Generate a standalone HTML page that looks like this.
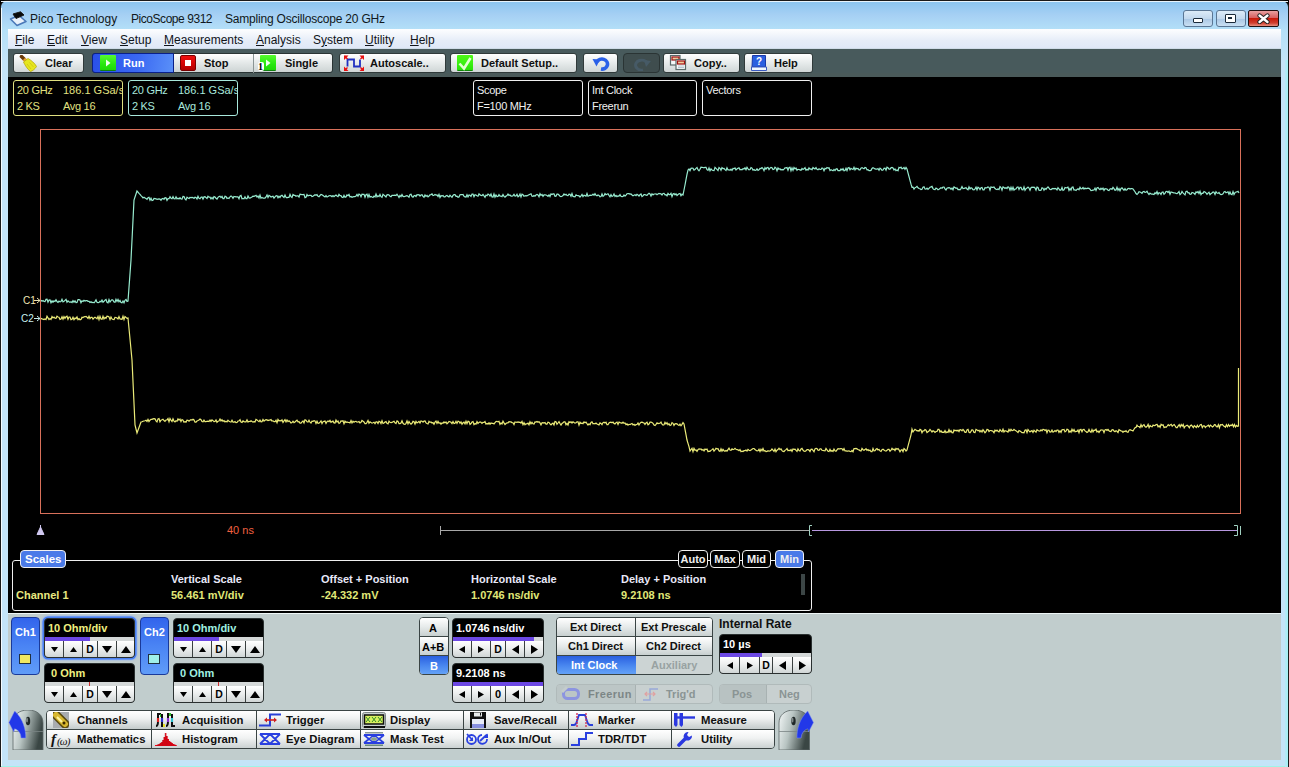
<!DOCTYPE html>
<html><head><meta charset="utf-8"><style>
*{margin:0;padding:0;box-sizing:border-box}
html,body{width:1289px;height:767px;overflow:hidden;background:#000;font-family:"Liberation Sans", sans-serif}
.t{position:absolute;white-space:nowrap;line-height:1}
.btn{position:absolute;border:1px solid #303a3a;border-radius:3px;background:linear-gradient(#ffffff,#e9eded 45%,#cfd6d6);}
.b{font-weight:bold}
</style></head><body>

<div style="position:absolute;left:0px;top:0px;width:1289px;height:767px;background:linear-gradient(#8ec6f0 2px,#a6d0f4 14px,#b4e0f8 29px,#c4e4f8 60px,#c4e4f8 760px);border-left:1px solid #1a1a1a;border-top:1px solid #1a1a1a;border-right:1px solid #1a1a1a;border-radius:7px 7px 0 0"></div>
<div style="position:absolute;left:1px;top:1px;width:1287px;height:1px;background:#e8f4fc"></div>
<div style="position:absolute;left:1px;top:8px;width:1px;height:759px;background:#f4fbff"></div>
<div style="position:absolute;left:1px;top:766px;width:1287px;height:1px;background:#9ff4e6"></div>
<div style="position:absolute;left:1285px;top:60px;width:3px;height:707px;background:linear-gradient(90deg,#b8e8f8,#a2f2f4)"></div>
<svg style="position:absolute;left:9px;top:10px" width="18" height="17" viewBox="0 0 18 17">
<path d="M1.5 9 L10 5.5 L17 11.5 L8 15.5 Z" fill="#e8f0fa" stroke="#4a78b8" stroke-width="1.6" stroke-linejoin="round"/>
<path d="M4 4 L11.5 1.8 L15 5 L7 8.5 Z" fill="#0a0a0a" stroke="#1a1a1a" stroke-width="1" stroke-linejoin="round"/>
</svg>
<div class="t" style="left:30px;top:13px;font-size:12px;color:#101820">Pico Technology</div>
<div class="t" style="left:131px;top:13px;font-size:12px;color:#101820;letter-spacing:-0.45px">PicoScope 9312</div>
<div class="t" style="left:225px;top:13px;font-size:12px;color:#101820;letter-spacing:-0.2px">Sampling Oscilloscope 20 GHz</div>
<div style="position:absolute;left:1183px;top:10px;width:30px;height:17px;border:1px solid #5a7694;border-radius:3px;background:linear-gradient(#dcebf8,#c3d9ee 50%,#a9c6e4 52%,#c9e0f3)"></div>
<div style="position:absolute;left:1193px;top:18px;width:10px;height:5px;border:1.5px solid #1a2a3a;background:#fff;border-radius:1px"></div>
<div style="position:absolute;left:1216px;top:10px;width:30px;height:17px;border:1px solid #5a7694;border-radius:3px;background:linear-gradient(#dcebf8,#c3d9ee 50%,#a9c6e4 52%,#c9e0f3)"></div>
<div style="position:absolute;left:1225px;top:14px;width:11px;height:9px;border:1.5px solid #1a2a3a;background:#fff;border-radius:1px"><div style="position:absolute;left:2px;top:2px;width:4px;height:2px;background:#1a2a3a"></div></div>
<div style="position:absolute;left:1248px;top:10px;width:31px;height:17px;border:1px solid #201010;border-radius:2px;background:linear-gradient(#e8a0a0,#d86060 45%,#c81a0a 50%,#d04030 80%,#e89080)"></div>
<svg style="position:absolute;left:1256px;top:13px" width="15" height="11" viewBox="0 0 15 11"><path d="M3.5 2.5 L11.5 9 M11.5 2.5 L3.5 9" stroke="#202020" stroke-width="4.2" stroke-linecap="round"/><path d="M3.5 2.5 L11.5 9 M11.5 2.5 L3.5 9" stroke="#fff" stroke-width="2.4" stroke-linecap="round"/></svg>
<div style="position:absolute;left:8px;top:29px;width:1273px;height:20px;background:linear-gradient(#fdfeff,#f4f7fc 25%,#e6edf8 60%,#dfe8f7);border-bottom:1px solid #cfdce8"></div>
<div class="t" style="left:15px;top:33px;font-size:12px;color:#10141a;line-height:14px"><u>F</u>ile</div>
<div class="t" style="left:47px;top:33px;font-size:12px;color:#10141a;line-height:14px"><u>E</u>dit</div>
<div class="t" style="left:81px;top:33px;font-size:12px;color:#10141a;line-height:14px"><u>V</u>iew</div>
<div class="t" style="left:120px;top:33px;font-size:12px;color:#10141a;line-height:14px"><u>S</u>etup</div>
<div class="t" style="left:164px;top:33px;font-size:12px;color:#10141a;line-height:14px"><u>M</u>easurements</div>
<div class="t" style="left:256px;top:33px;font-size:12px;color:#10141a;line-height:14px"><u>A</u>nalysis</div>
<div class="t" style="left:313px;top:33px;font-size:12px;color:#10141a;line-height:14px">S<u>y</u>stem</div>
<div class="t" style="left:365px;top:33px;font-size:12px;color:#10141a;line-height:14px"><u>U</u>tility</div>
<div class="t" style="left:410px;top:33px;font-size:12px;color:#10141a;line-height:14px"><u>H</u>elp</div>
<div style="position:absolute;left:8px;top:49px;width:1273px;height:28px;background:#485a5c"></div>
<div style="position:absolute;left:8px;top:73px;width:1273px;height:4px;background:#4a5a5a"></div>
<div class="btn" style="left:13px;top:53px;width:71px;height:20px;"></div>
<div class="t" style="left:45px;top:58px;font-size:11px;font-weight:bold;color:#101010;">Clear</div>
<svg style="position:absolute;left:19px;top:55px" width="19" height="17" viewBox="0 0 19 17">
<path d="M2.5 1.5 L5.5 4.5" stroke="#6a3a08" stroke-width="3.6" stroke-linecap="round"/>
<path d="M5 4 L8 7" stroke="#e8a030" stroke-width="3.6"/>
<path d="M4.5 7 L9 3.5 C12 5 16 8.5 17.5 11.5 C16 14 13.5 16 11.5 16.5 C8.5 14 6 10.5 4.5 7 Z" fill="#e6e61e" stroke="#b8a810" stroke-width="0.8"/>
<path d="M8 9 L12 14 M10.5 7.5 L14.5 12" stroke="#c8c010" stroke-width="0.7"/>
</svg>
<div style="position:absolute;left:92px;top:53px;width:241px;height:20px;border:1px solid #2a3434;border-radius:3px;background:linear-gradient(#ffffff,#e6eaea 45%,#cdd4d4)"></div>
<div style="position:absolute;left:92px;top:53px;width:82px;height:20px;border:1px solid #0a2088;border-radius:3px 0 0 3px;background:linear-gradient(100deg,#2a50ea,#3a68f2 55%,#5a90f8)"></div>
<div style="position:absolute;left:253px;top:54px;width:1px;height:19px;background:#8a9494"></div>
<div style="position:absolute;left:100px;top:55px;width:16px;height:16px;background:linear-gradient(#58fa30,#28e810 60%,#20d808);border-bottom:1px solid #108010;border-radius:1px"></div>
<svg style="position:absolute;left:100px;top:55px" width="16" height="16"><path d="M6 4.5 L10.5 8 L6 11.5 Z" fill="#f0fff0"/></svg>
<div class="t" style="left:123px;top:58px;font-size:11px;font-weight:bold;color:#fff">Run</div>
<div style="position:absolute;left:180px;top:55px;width:16px;height:16px;background:linear-gradient(#f01010,#d00404 60%,#b00000);border:1px solid #700;border-radius:2px"></div>
<div style="position:absolute;left:185px;top:60px;width:6px;height:6px;background:#fff"></div>
<div class="t" style="left:204px;top:58px;font-size:11px;font-weight:bold;color:#101010">Stop</div>
<div style="position:absolute;left:260px;top:55px;width:16px;height:16px;background:linear-gradient(#58fa30,#28e810 60%,#20d808);border-bottom:1px solid #108010;border-radius:1px"></div>
<svg style="position:absolute;left:260px;top:55px" width="16" height="16"><path d="M6 4.5 L10.5 8 L6 11.5 Z" fill="#f0fff0"/></svg>
<div style="position:absolute;left:258px;top:62px;width:6px;height:9px;background:#fff;border-radius:2px"></div>
<div class="t" style="left:258px;top:62px;font-size:10px;font-weight:bold;color:#000;font-family:'Liberation Serif'">1</div>
<div class="t" style="left:285px;top:58px;font-size:11px;font-weight:bold;color:#101010">Single</div>
<div class="btn" style="left:339px;top:53px;width:107px;height:20px;"></div>
<div class="t" style="left:370px;top:58px;font-size:11px;font-weight:bold;color:#101010;">Autoscale..</div>
<svg style="position:absolute;left:344px;top:55px" width="20" height="17" viewBox="0 0 20 17">
<path d="M3.5 11.5 V4.5 H10 V11.5 H16 V4.5" stroke="#2030c0" stroke-width="1.8" fill="none"/>
<path d="M0 0.5 H4.5 L0 5 Z M20 0.5 H15.5 L20 5 Z M0 16 H4.5 L0 11.5 Z M20 16 H15.5 L20 11.5 Z" fill="#e81010"/>
<path d="M0.5 1 L3.5 4 M19.5 1 L16.5 4 M0.5 15.5 L3.5 12.5 M19.5 15.5 L16.5 12.5" stroke="#e81010" stroke-width="1.4"/>
</svg>
<div class="btn" style="left:450px;top:53px;width:127px;height:20px;"></div>
<div class="t" style="left:481px;top:58px;font-size:11px;font-weight:bold;color:#101010;">Default Setup..</div>
<div style="position:absolute;left:457px;top:55px;width:16px;height:16px;background:linear-gradient(#50f818,#38f010 60%,#28e008);border-bottom:1.5px solid #108808;border-radius:1px"></div>
<svg style="position:absolute;left:457px;top:55px" width="16" height="16"><path d="M2.5 8.5 L7 13.5 L13.5 3" stroke="#e0ffd0" stroke-width="2.6" fill="none"/></svg>
<div class="btn" style="left:583px;top:53px;width:35px;height:20px;"></div>
<svg style="position:absolute;left:591px;top:56px" width="20" height="15" viewBox="0 0 20 15"><path d="M6 6 A5.5 5 0 1 1 10 13" stroke="#2a60e8" stroke-width="3.6" fill="none"/><path d="M1.5 3 L9 3.5 L5.5 10.5 Z" fill="#2a60e8"/></svg>
<div style="position:absolute;left:623px;top:53px;width:37px;height:20px;border:1px solid #2a3434;border-radius:4px;background:#3f4d4e"></div>
<svg style="position:absolute;left:632px;top:57px" width="20" height="14" viewBox="0 0 20 14"><path d="M15 6 A6 5 0 1 0 11 13" stroke="#465a66" stroke-width="3" fill="none"/><path d="M19 4 L12 3 L14 10 Z" fill="#465a66"/></svg>
<div class="btn" style="left:663px;top:53px;width:77px;height:20px;"></div>
<div class="t" style="left:694px;top:58px;font-size:11px;font-weight:bold;color:#101010;">Copy..</div>
<svg style="position:absolute;left:669px;top:54px" width="19" height="17" viewBox="0 0 19 17">
<rect x="1.5" y="1.5" width="9.5" height="9.5" fill="#f4fafa" stroke="#5a6a6a" stroke-width="1.2"/><rect x="3" y="3" width="7" height="3" fill="#f0d0a0" stroke="#a01010" stroke-width="1.2"/>
<rect x="7" y="5.5" width="9.5" height="10" fill="#f8fcfc" stroke="#5a6a6a" stroke-width="1.2"/><rect x="8.5" y="7" width="7" height="3" fill="#f0d0a0" stroke="#a01010" stroke-width="1.2"/>
<path d="M9 12 H15 M9 13.5 H15" stroke="#a0b0c0" stroke-width="0.7"/>
</svg>
<div class="btn" style="left:744px;top:53px;width:69px;height:20px;"></div>
<div class="t" style="left:774px;top:58px;font-size:11px;font-weight:bold;color:#101010;">Help</div>
<svg style="position:absolute;left:751px;top:55px" width="16" height="16" viewBox="0 0 16 16">
<path d="M1.5 0.5 H14.5 V12 H1 Z" fill="#2a60e0" stroke="#1a3aa8" stroke-width="1"/>
<path d="M0.5 12 H15.5 V15.5 H0.5 Z" fill="#f0f8ff" stroke="#3a5ac0" stroke-width="1"/>
<text x="8" y="10" font-size="10" font-weight="bold" fill="#fff" text-anchor="middle" font-family="Liberation Sans">?</text>
</svg>
<div style="position:absolute;left:8px;top:77px;width:1273px;height:537px;background:#000"></div>
<div style="position:absolute;left:13px;top:80px;width:110px;height:36px;border:1px solid #e0e080;border-radius:3px;overflow:hidden">
<div class="t" style="left:3px;top:4px;font-size:11px;letter-spacing:-0.3px;color:#e0e080">20 GHz</div>
<div class="t" style="left:49px;top:4px;font-size:11px;color:#e0e080">186.1 GSa/s</div>
<div class="t" style="left:3px;top:20px;font-size:11px;letter-spacing:-0.3px;color:#e0e080">2 KS</div>
<div class="t" style="left:49px;top:20px;font-size:11px;letter-spacing:-0.3px;color:#e0e080">Avg 16</div>
</div>
<div style="position:absolute;left:128px;top:80px;width:110px;height:36px;border:1px solid #a8e8dc;border-radius:3px;overflow:hidden">
<div class="t" style="left:3px;top:4px;font-size:11px;letter-spacing:-0.3px;color:#a8e8dc">20 GHz</div>
<div class="t" style="left:49px;top:4px;font-size:11px;color:#a8e8dc">186.1 GSa/s</div>
<div class="t" style="left:3px;top:20px;font-size:11px;letter-spacing:-0.3px;color:#a8e8dc">2 KS</div>
<div class="t" style="left:49px;top:20px;font-size:11px;letter-spacing:-0.3px;color:#a8e8dc">Avg 16</div>
</div>
<div style="position:absolute;left:473px;top:80px;width:110px;height:36px;border:1px solid #f0f0f0;border-radius:3px;overflow:hidden">
<div class="t" style="left:3px;top:4px;font-size:11px;letter-spacing:-0.3px;color:#f0f0f0">Scope</div>
<div class="t" style="left:3px;top:20px;font-size:11px;letter-spacing:-0.3px;color:#f0f0f0">F=100 MHz</div>
</div>
<div style="position:absolute;left:588px;top:80px;width:109px;height:36px;border:1px solid #f0f0f0;border-radius:3px;overflow:hidden">
<div class="t" style="left:3px;top:4px;font-size:11px;letter-spacing:-0.3px;color:#f0f0f0">Int Clock</div>
<div class="t" style="left:3px;top:20px;font-size:11px;letter-spacing:-0.3px;color:#f0f0f0">Freerun</div>
</div>
<div style="position:absolute;left:702px;top:80px;width:110px;height:36px;border:1px solid #f0f0f0;border-radius:3px;overflow:hidden">
<div class="t" style="left:3px;top:4px;font-size:11px;letter-spacing:-0.3px;color:#f0f0f0">Vectors</div>
<div class="t" style="left:3px;top:20px;font-size:11px;letter-spacing:-0.3px;color:#f0f0f0"></div>
</div>
<svg style="position:absolute;left:0;top:0" width="1289" height="767">
<rect x="40.5" y="129.5" width="1200" height="384" fill="none" stroke="#d8705a" stroke-width="1"/>
<polyline points="41.0,300.1 42.0,301.2 43.0,300.5 44.0,301.4 45.0,301.5 46.0,299.4 47.0,299.2 48.0,302.2 49.0,300.1 50.0,300.0 51.0,302.8 52.0,300.9 53.0,302.2 54.0,300.9 55.0,301.5 56.0,299.7 57.0,301.5 58.0,302.3 59.0,301.1 60.0,301.9 61.0,301.6 62.0,299.4 63.0,301.9 64.0,301.3 65.0,300.3 66.0,299.3 67.0,302.3 68.0,300.9 69.0,301.8 70.0,302.4 71.0,301.8 72.0,302.5 73.0,300.6 74.0,302.1 75.0,300.8 76.0,302.6 77.0,302.4 78.0,299.6 79.0,299.7 80.0,300.0 81.0,302.7 82.0,300.8 83.0,301.5 84.0,300.3 85.0,301.0 86.0,300.6 87.0,300.5 88.0,301.3 89.0,301.3 90.0,302.5 91.0,301.7 92.0,302.5 93.0,302.3 94.0,302.8 95.0,301.6 96.0,299.8 97.0,302.3 98.0,302.7 99.0,302.5 100.0,301.2 101.0,301.8 102.0,300.0 103.0,302.2 104.0,301.3 105.0,300.2 106.0,299.4 107.0,302.3 108.0,302.8 109.0,299.5 110.0,302.1 111.0,300.7 112.0,299.7 113.0,300.3 114.0,302.0 115.0,302.3 116.0,299.4 117.0,301.4 118.0,299.4 119.0,301.8 120.0,300.4 121.0,302.4 122.0,302.7 123.0,301.0 124.0,302.8 125.0,300.3 126.0,299.5 127.0,301.4 128.0,301.0 129.0,287.3 130.0,273.7 131.0,260.0 132.0,240.0 133.0,220.0 134.0,200.0 135.0,197.0 136.0,194.0 137.0,191.0 138.0,192.1 139.0,193.3 140.0,194.4 141.0,195.6 142.0,196.7 143.0,197.9 144.0,197.3 145.0,197.9 146.0,198.6 147.0,199.3 148.0,197.7 149.0,197.3 150.0,200.2 151.0,198.2 152.0,200.5 153.0,200.3 154.0,198.4 155.0,198.6 156.0,198.8 157.0,199.3 158.0,199.1 159.0,198.9 160.0,199.1 161.0,200.3 162.0,198.7 163.0,198.4 164.0,199.4 165.0,197.7 166.0,197.9 167.0,200.3 168.0,198.6 169.0,198.7 170.0,196.7 171.0,198.2 172.0,198.7 173.0,196.7 174.0,198.8 175.0,198.9 176.0,196.8 177.0,198.8 178.0,198.2 179.0,199.0 180.0,197.8 181.0,199.0 182.0,199.1 183.0,196.5 184.0,196.6 185.0,198.8 186.0,199.9 187.0,197.3 188.0,198.0 189.0,198.5 190.0,197.5 191.0,197.6 192.0,197.4 193.0,197.6 194.0,198.4 195.0,197.3 196.0,197.6 197.0,199.0 198.0,196.3 199.0,198.2 200.0,198.8 201.0,197.2 202.0,196.9 203.0,199.0 204.0,196.9 205.0,196.7 206.0,197.6 207.0,198.5 208.0,196.3 209.0,197.1 210.0,197.1 211.0,198.9 212.0,197.5 213.0,199.0 214.0,196.5 215.0,197.0 216.0,198.2 217.0,199.0 218.0,197.4 219.0,196.6 220.0,196.2 221.0,197.6 222.0,196.4 223.0,198.6 224.0,198.7 225.0,196.3 226.0,196.6 227.0,198.5 228.0,197.9 229.0,198.5 230.0,196.8 231.0,196.0 232.0,196.6 233.0,198.3 234.0,196.4 235.0,196.7 236.0,196.9 237.0,196.9 238.0,196.9 239.0,198.7 240.0,195.9 241.0,195.4 242.0,198.7 243.0,198.5 244.0,198.8 245.0,196.8 246.0,198.7 247.0,198.6 248.0,196.0 249.0,197.9 250.0,198.2 251.0,197.5 252.0,197.0 253.0,196.1 254.0,196.3 255.0,195.9 256.0,195.3 257.0,197.1 258.0,196.0 259.0,197.9 260.0,195.1 261.0,198.2 262.0,197.4 263.0,198.2 264.0,198.1 265.0,198.1 266.0,196.9 267.0,194.9 268.0,197.5 269.0,195.4 270.0,195.9 271.0,197.1 272.0,196.6 273.0,196.2 274.0,198.1 275.0,196.9 276.0,195.9 277.0,195.6 278.0,197.7 279.0,196.3 280.0,197.4 281.0,195.8 282.0,195.3 283.0,196.5 284.0,197.4 285.0,195.1 286.0,197.3 287.0,197.8 288.0,197.3 289.0,197.4 290.0,194.4 291.0,196.6 292.0,197.5 293.0,194.5 294.0,195.3 295.0,195.3 296.0,196.2 297.0,195.8 298.0,195.9 299.0,197.0 300.0,194.2 301.0,194.4 302.0,194.7 303.0,194.6 304.0,194.4 305.0,197.7 306.0,197.3 307.0,194.5 308.0,196.0 309.0,195.3 310.0,195.3 311.0,195.4 312.0,196.5 313.0,196.3 314.0,195.5 315.0,194.8 316.0,195.3 317.0,194.6 318.0,196.2 319.0,196.7 320.0,195.5 321.0,194.4 322.0,194.8 323.0,195.5 324.0,196.3 325.0,197.0 326.0,195.5 327.0,197.0 328.0,196.4 329.0,195.7 330.0,195.5 331.0,195.9 332.0,196.6 333.0,195.6 334.0,196.6 335.0,195.8 336.0,195.0 337.0,196.0 338.0,196.6 339.0,194.4 340.0,195.6 341.0,195.6 342.0,197.3 343.0,197.5 344.0,195.4 345.0,197.3 346.0,196.9 347.0,195.0 348.0,195.7 349.0,194.5 350.0,197.0 351.0,196.5 352.0,197.3 353.0,196.9 354.0,196.5 355.0,196.7 356.0,196.1 357.0,194.4 358.0,196.2 359.0,194.1 360.0,194.6 361.0,196.8 362.0,194.2 363.0,194.4 364.0,194.4 365.0,197.2 366.0,194.7 367.0,194.1 368.0,197.1 369.0,194.5 370.0,197.1 371.0,196.4 372.0,197.0 373.0,197.4 374.0,196.1 375.0,196.9 376.0,194.1 377.0,196.8 378.0,195.8 379.0,196.6 380.0,194.4 381.0,196.7 382.0,197.4 383.0,194.2 384.0,195.1 385.0,196.0 386.0,197.0 387.0,194.8 388.0,194.6 389.0,194.9 390.0,196.2 391.0,196.7 392.0,195.4 393.0,195.3 394.0,195.4 395.0,195.2 396.0,195.5 397.0,194.2 398.0,195.7 399.0,197.4 400.0,195.4 401.0,196.6 402.0,194.5 403.0,196.4 404.0,196.7 405.0,196.4 406.0,195.8 407.0,195.7 408.0,196.2 409.0,197.1 410.0,194.5 411.0,194.3 412.0,196.6 413.0,197.2 414.0,195.8 415.0,195.5 416.0,196.5 417.0,194.6 418.0,194.9 419.0,194.6 420.0,196.0 421.0,195.0 422.0,194.7 423.0,196.4 424.0,197.3 425.0,194.9 426.0,196.4 427.0,195.4 428.0,196.9 429.0,196.0 430.0,194.8 431.0,194.6 432.0,193.9 433.0,195.6 434.0,195.2 435.0,194.5 436.0,195.1 437.0,195.0 438.0,196.6 439.0,194.4 440.0,197.4 441.0,195.6 442.0,196.0 443.0,195.5 444.0,196.8 445.0,196.8 446.0,195.8 447.0,195.5 448.0,196.4 449.0,196.9 450.0,195.2 451.0,196.4 452.0,197.3 453.0,195.5 454.0,194.6 455.0,194.6 456.0,196.4 457.0,196.2 458.0,197.2 459.0,196.9 460.0,194.7 461.0,194.5 462.0,194.7 463.0,194.4 464.0,196.3 465.0,196.9 466.0,197.0 467.0,194.7 468.0,196.9 469.0,194.9 470.0,195.3 471.0,196.4 472.0,194.1 473.0,194.1 474.0,196.7 475.0,194.8 476.0,195.0 477.0,195.8 478.0,196.2 479.0,193.8 480.0,194.9 481.0,195.3 482.0,195.5 483.0,194.5 484.0,195.8 485.0,197.2 486.0,195.1 487.0,195.7 488.0,194.1 489.0,194.7 490.0,196.1 491.0,194.1 492.0,196.9 493.0,197.0 494.0,194.0 495.0,197.1 496.0,195.0 497.0,196.5 498.0,196.4 499.0,194.7 500.0,196.1 501.0,196.0 502.0,196.6 503.0,194.6 504.0,196.4 505.0,197.1 506.0,196.1 507.0,195.6 508.0,194.1 509.0,195.4 510.0,194.9 511.0,196.2 512.0,196.1 513.0,195.7 514.0,194.3 515.0,196.0 516.0,195.9 517.0,194.3 518.0,196.8 519.0,196.0 520.0,194.1 521.0,197.0 522.0,194.1 523.0,194.8 524.0,196.2 525.0,195.8 526.0,195.6 527.0,195.9 528.0,195.3 529.0,194.7 530.0,194.2 531.0,193.8 532.0,196.2 533.0,196.3 534.0,195.5 535.0,196.2 536.0,194.9 537.0,194.5 538.0,195.0 539.0,196.7 540.0,193.7 541.0,195.4 542.0,194.5 543.0,196.3 544.0,194.8 545.0,194.8 546.0,195.0 547.0,195.5 548.0,196.3 549.0,194.8 550.0,196.6 551.0,193.9 552.0,194.5 553.0,193.9 554.0,193.9 555.0,196.3 556.0,196.1 557.0,194.2 558.0,194.2 559.0,195.0 560.0,196.2 561.0,196.5 562.0,196.2 563.0,195.6 564.0,194.0 565.0,194.9 566.0,194.2 567.0,195.4 568.0,195.5 569.0,194.2 570.0,194.4 571.0,196.3 572.0,193.6 573.0,196.4 574.0,196.7 575.0,196.9 576.0,194.9 577.0,195.5 578.0,195.6 579.0,195.8 580.0,197.0 581.0,195.9 582.0,194.5 583.0,196.6 584.0,195.2 585.0,195.6 586.0,196.1 587.0,193.5 588.0,196.2 589.0,195.8 590.0,195.2 591.0,195.3 592.0,195.1 593.0,194.1 594.0,195.3 595.0,193.6 596.0,195.2 597.0,195.7 598.0,195.0 599.0,195.5 600.0,196.9 601.0,196.6 602.0,193.9 603.0,196.3 604.0,195.7 605.0,193.6 606.0,194.7 607.0,194.2 608.0,193.7 609.0,195.3 610.0,196.7 611.0,194.6 612.0,196.5 613.0,195.9 614.0,193.9 615.0,196.5 616.0,195.5 617.0,196.7 618.0,195.9 619.0,196.0 620.0,194.6 621.0,196.3 622.0,196.7 623.0,196.5 624.0,194.9 625.0,196.1 626.0,195.1 627.0,193.7 628.0,193.5 629.0,193.6 630.0,194.1 631.0,193.9 632.0,195.1 633.0,195.8 634.0,195.3 635.0,194.8 636.0,195.7 637.0,194.4 638.0,195.0 639.0,196.0 640.0,194.8 641.0,194.0 642.0,196.5 643.0,195.9 644.0,194.6 645.0,194.6 646.0,195.2 647.0,195.4 648.0,194.1 649.0,193.3 650.0,194.0 651.0,196.1 652.0,193.8 653.0,194.9 654.0,194.0 655.0,194.0 656.0,193.9 657.0,194.7 658.0,193.9 659.0,193.4 660.0,193.7 661.0,193.9 662.0,195.0 663.0,193.5 664.0,193.3 665.0,194.9 666.0,194.7 667.0,195.8 668.0,193.4 669.0,194.7 670.0,194.7 671.0,193.3 672.0,196.7 673.0,194.0 674.0,193.6 675.0,194.9 676.0,193.8 677.0,195.5 678.0,194.5 679.0,193.7 680.0,193.4 681.0,195.8 682.0,194.2 683.0,195.0 684.0,190.0 685.0,185.0 686.0,179.7 687.0,174.3 688.0,170.0 689.0,168.9 690.0,170.6 691.0,168.3 692.0,168.1 693.0,168.2 694.0,170.1 695.0,169.5 696.0,168.4 697.0,167.5 698.0,169.7 699.0,170.7 700.0,169.3 701.0,167.2 702.0,167.3 703.0,167.5 704.0,167.8 705.0,167.3 706.0,167.4 707.0,169.6 708.0,170.4 709.0,167.9 710.0,170.7 711.0,168.9 712.0,170.1 713.0,170.5 714.0,170.6 715.0,167.3 716.0,168.3 717.0,169.4 718.0,170.6 719.0,167.5 720.0,168.3 721.0,170.3 722.0,167.6 723.0,168.6 724.0,168.4 725.0,169.6 726.0,170.5 727.0,167.8 728.0,169.9 729.0,169.8 730.0,170.2 731.0,169.2 732.0,170.5 733.0,168.5 734.0,168.7 735.0,168.0 736.0,170.0 737.0,168.9 738.0,168.2 739.0,167.8 740.0,169.8 741.0,169.4 742.0,169.8 743.0,168.6 744.0,169.0 745.0,167.8 746.0,169.8 747.0,167.3 748.0,168.9 749.0,169.9 750.0,169.6 751.0,167.5 752.0,168.1 753.0,170.2 754.0,169.5 755.0,170.4 756.0,170.3 757.0,168.8 758.0,170.4 759.0,169.8 760.0,168.4 761.0,168.5 762.0,167.5 763.0,168.6 764.0,170.6 765.0,167.6 766.0,169.2 767.0,167.6 768.0,167.5 769.0,169.5 770.0,168.1 771.0,167.4 772.0,167.7 773.0,169.5 774.0,169.3 775.0,167.2 776.0,168.0 777.0,170.7 778.0,168.0 779.0,169.2 780.0,168.7 781.0,170.0 782.0,169.4 783.0,170.0 784.0,169.1 785.0,167.9 786.0,167.8 787.0,167.5 788.0,170.2 789.0,167.6 790.0,167.3 791.0,170.7 792.0,167.9 793.0,170.4 794.0,167.5 795.0,168.9 796.0,168.0 797.0,170.2 798.0,169.4 799.0,169.5 800.0,169.9 801.0,170.3 802.0,168.4 803.0,169.4 804.0,168.8 805.0,167.6 806.0,170.2 807.0,169.3 808.0,170.1 809.0,167.9 810.0,169.1 811.0,168.9 812.0,169.8 813.0,167.5 814.0,168.4 815.0,168.9 816.0,167.5 817.0,169.2 818.0,169.8 819.0,168.7 820.0,169.5 821.0,169.4 822.0,168.0 823.0,168.5 824.0,170.8 825.0,168.4 826.0,168.8 827.0,167.5 828.0,168.0 829.0,167.8 830.0,170.6 831.0,169.8 832.0,170.3 833.0,170.8 834.0,169.4 835.0,170.6 836.0,169.1 837.0,168.7 838.0,170.6 839.0,170.5 840.0,170.6 841.0,168.9 842.0,170.0 843.0,168.7 844.0,170.8 845.0,170.5 846.0,168.3 847.0,170.6 848.0,167.9 849.0,167.5 850.0,169.8 851.0,168.3 852.0,169.1 853.0,169.5 854.0,167.3 855.0,169.9 856.0,168.2 857.0,168.8 858.0,168.4 859.0,169.9 860.0,169.9 861.0,168.2 862.0,167.6 863.0,168.3 864.0,168.7 865.0,167.5 866.0,167.8 867.0,169.9 868.0,169.7 869.0,170.7 870.0,170.7 871.0,170.4 872.0,168.5 873.0,167.8 874.0,168.3 875.0,168.9 876.0,169.1 877.0,169.2 878.0,168.5 879.0,170.3 880.0,168.2 881.0,168.9 882.0,170.4 883.0,170.1 884.0,168.3 885.0,168.1 886.0,170.1 887.0,167.2 888.0,167.7 889.0,169.1 890.0,169.1 891.0,167.8 892.0,167.4 893.0,167.9 894.0,170.0 895.0,168.9 896.0,170.7 897.0,170.0 898.0,170.7 899.0,167.3 900.0,167.9 901.0,167.2 902.0,168.8 903.0,168.4 904.0,167.4 905.0,169.2 906.0,167.5 907.0,169.0 908.0,172.8 909.0,176.6 910.0,180.4 911.0,184.2 912.0,187.3 913.0,187.1 914.0,189.1 915.0,187.7 916.0,187.2 917.0,186.4 918.0,187.8 919.0,188.5 920.0,188.7 921.0,189.5 922.0,189.2 923.0,187.1 924.0,186.7 925.0,189.0 926.0,189.1 927.0,188.1 928.0,189.3 929.0,188.3 930.0,187.3 931.0,186.9 932.0,186.4 933.0,188.6 934.0,189.5 935.0,189.6 936.0,188.0 937.0,188.7 938.0,189.7 939.0,189.3 940.0,188.5 941.0,187.8 942.0,188.2 943.0,187.0 944.0,187.0 945.0,188.8 946.0,189.9 947.0,188.3 948.0,187.8 949.0,187.6 950.0,188.0 951.0,189.3 952.0,188.0 953.0,189.8 954.0,186.9 955.0,187.5 956.0,188.3 957.0,187.9 958.0,189.5 959.0,189.4 960.0,189.8 961.0,188.6 962.0,186.5 963.0,188.5 964.0,188.4 965.0,188.2 966.0,187.5 967.0,189.0 968.0,189.7 969.0,186.8 970.0,188.9 971.0,187.8 972.0,188.3 973.0,189.7 974.0,189.9 975.0,188.8 976.0,187.2 977.0,189.8 978.0,187.2 979.0,187.9 980.0,189.5 981.0,187.7 982.0,187.5 983.0,189.9 984.0,189.9 985.0,187.7 986.0,187.9 987.0,187.6 988.0,187.0 989.0,187.4 990.0,190.1 991.0,186.8 992.0,187.4 993.0,187.3 994.0,186.9 995.0,188.5 996.0,189.3 997.0,189.6 998.0,188.9 999.0,189.5 1000.0,186.6 1001.0,187.6 1002.0,190.1 1003.0,186.9 1004.0,187.6 1005.0,188.4 1006.0,187.6 1007.0,188.6 1008.0,186.8 1009.0,187.5 1010.0,190.1 1011.0,187.2 1012.0,189.9 1013.0,187.3 1014.0,190.2 1015.0,189.1 1016.0,189.0 1017.0,187.2 1018.0,186.9 1019.0,189.4 1020.0,187.3 1021.0,187.4 1022.0,189.7 1023.0,189.9 1024.0,186.9 1025.0,190.2 1026.0,188.6 1027.0,188.1 1028.0,187.1 1029.0,188.1 1030.0,190.3 1031.0,187.7 1032.0,187.2 1033.0,187.3 1034.0,187.2 1035.0,188.0 1036.0,190.1 1037.0,187.0 1038.0,187.5 1039.0,190.2 1040.0,190.4 1041.0,190.3 1042.0,187.7 1043.0,188.1 1044.0,190.2 1045.0,188.5 1046.0,189.3 1047.0,187.9 1048.0,186.9 1049.0,188.1 1050.0,189.5 1051.0,189.6 1052.0,188.9 1053.0,188.5 1054.0,188.8 1055.0,188.4 1056.0,188.8 1057.0,189.9 1058.0,187.6 1059.0,189.0 1060.0,190.2 1061.0,189.9 1062.0,187.5 1063.0,190.4 1064.0,189.9 1065.0,187.5 1066.0,187.9 1067.0,187.6 1068.0,187.1 1069.0,190.4 1070.0,188.4 1071.0,190.1 1072.0,187.3 1073.0,187.0 1074.0,190.1 1075.0,189.8 1076.0,190.5 1077.0,189.4 1078.0,188.8 1079.0,189.7 1080.0,187.3 1081.0,188.9 1082.0,188.6 1083.0,187.5 1084.0,189.1 1085.0,188.1 1086.0,188.8 1087.0,188.3 1088.0,188.1 1089.0,188.3 1090.0,189.2 1091.0,190.5 1092.0,190.4 1093.0,190.1 1094.0,190.0 1095.0,188.1 1096.0,190.5 1097.0,188.0 1098.0,187.5 1099.0,188.8 1100.0,189.7 1101.0,188.3 1102.0,189.4 1103.0,188.1 1104.0,190.5 1105.0,188.7 1106.0,188.8 1107.0,189.0 1108.0,190.2 1109.0,190.6 1110.0,189.0 1111.0,188.7 1112.0,189.3 1113.0,187.4 1114.0,188.6 1115.0,190.2 1116.0,189.9 1117.0,187.3 1118.0,190.2 1119.0,188.5 1120.0,190.7 1121.0,188.5 1122.0,187.9 1123.0,189.1 1124.0,190.3 1125.0,188.7 1126.0,190.3 1127.0,189.7 1128.0,188.5 1129.0,188.3 1130.0,189.0 1131.0,188.6 1132.0,188.5 1133.0,189.0 1134.0,190.3 1135.0,191.7 1136.0,193.5 1137.0,194.4 1138.0,193.3 1139.0,191.7 1140.0,192.0 1141.0,192.5 1142.0,193.4 1143.0,191.7 1144.0,191.5 1145.0,192.4 1146.0,192.2 1147.0,191.3 1148.0,193.1 1149.0,194.5 1150.0,193.1 1151.0,193.9 1152.0,194.2 1153.0,194.2 1154.0,194.5 1155.0,192.8 1156.0,193.7 1157.0,191.6 1158.0,194.4 1159.0,192.6 1160.0,192.9 1161.0,194.4 1162.0,192.2 1163.0,191.9 1164.0,194.2 1165.0,193.4 1166.0,191.5 1167.0,191.3 1168.0,192.5 1169.0,191.2 1170.0,194.2 1171.0,191.9 1172.0,192.2 1173.0,192.6 1174.0,193.0 1175.0,192.8 1176.0,193.5 1177.0,193.6 1178.0,192.8 1179.0,191.5 1180.0,194.7 1181.0,193.7 1182.0,191.5 1183.0,192.8 1184.0,193.9 1185.0,194.8 1186.0,191.4 1187.0,191.2 1188.0,192.9 1189.0,192.7 1190.0,194.4 1191.0,194.2 1192.0,192.4 1193.0,192.7 1194.0,193.3 1195.0,194.4 1196.0,191.9 1197.0,192.6 1198.0,191.5 1199.0,193.5 1200.0,191.3 1201.0,194.6 1202.0,193.1 1203.0,193.3 1204.0,191.5 1205.0,192.0 1206.0,192.9 1207.0,194.3 1208.0,193.1 1209.0,192.2 1210.0,194.7 1211.0,193.6 1212.0,193.1 1213.0,191.9 1214.0,192.3 1215.0,194.4 1216.0,191.7 1217.0,193.1 1218.0,193.4 1219.0,192.5 1220.0,194.0 1221.0,194.5 1222.0,194.3 1223.0,193.9 1224.0,191.9 1225.0,191.4 1226.0,192.8 1227.0,192.3 1228.0,191.9 1229.0,194.3 1230.0,192.0 1231.0,194.2 1232.0,194.6 1233.0,191.6 1234.0,194.5 1235.0,192.6 1236.0,192.0 1237.0,191.9 1238.0,191.3 1239.0,193.0" fill="none" stroke="#98ecd0" stroke-width="1.2"/>
<polyline points="41.0,318.4 42.0,318.9 43.0,319.1 44.0,319.6 45.0,318.9 46.0,319.5 47.0,316.3 48.0,317.9 49.0,319.6 50.0,318.5 51.0,319.4 52.0,316.6 53.0,317.9 54.0,317.1 55.0,318.2 56.0,318.3 57.0,316.2 58.0,317.0 59.0,317.2 60.0,319.5 61.0,319.0 62.0,316.8 63.0,319.1 64.0,316.7 65.0,318.4 66.0,316.7 67.0,316.2 68.0,319.3 69.0,317.0 70.0,317.0 71.0,319.7 72.0,319.3 73.0,317.2 74.0,319.7 75.0,318.1 76.0,318.6 77.0,316.9 78.0,319.6 79.0,318.7 80.0,319.7 81.0,319.4 82.0,317.3 83.0,317.5 84.0,316.8 85.0,316.7 86.0,316.4 87.0,317.3 88.0,318.4 89.0,316.2 90.0,318.6 91.0,317.4 92.0,317.3 93.0,319.1 94.0,317.9 95.0,317.3 96.0,317.9 97.0,318.7 98.0,316.4 99.0,319.7 100.0,316.3 101.0,318.9 102.0,319.2 103.0,316.3 104.0,319.0 105.0,317.5 106.0,318.3 107.0,316.2 108.0,316.4 109.0,316.9 110.0,319.6 111.0,316.9 112.0,318.9 113.0,319.5 114.0,319.6 115.0,317.4 116.0,317.5 117.0,318.1 118.0,319.0 119.0,316.6 120.0,318.9 121.0,319.1 122.0,319.3 123.0,316.3 124.0,319.6 125.0,316.5 126.0,317.4 127.0,318.4 128.0,318.0 129.0,328.5 130.0,339.0 131.0,349.5 132.0,360.0 133.0,381.7 134.0,403.3 135.0,425.0 136.0,429.0 137.0,433.0 138.0,430.2 139.0,427.5 140.0,424.8 141.0,422.0 142.0,421.7 143.0,421.3 144.0,421.0 145.0,420.7 146.0,420.3 147.0,421.5 148.0,419.4 149.0,421.5 150.0,420.2 151.0,419.4 152.0,419.4 153.0,418.9 154.0,418.6 155.0,418.8 156.0,420.8 157.0,421.9 158.0,418.9 159.0,418.5 160.0,421.9 161.0,420.3 162.0,419.8 163.0,419.2 164.0,420.5 165.0,421.4 166.0,420.0 167.0,419.9 168.0,418.6 169.0,421.7 170.0,418.5 171.0,420.2 172.0,421.5 173.0,418.9 174.0,421.1 175.0,421.9 176.0,420.8 177.0,421.3 178.0,418.9 179.0,420.1 180.0,419.1 181.0,421.6 182.0,419.6 183.0,420.2 184.0,422.2 185.0,421.6 186.0,422.1 187.0,420.2 188.0,420.4 189.0,421.2 190.0,420.3 191.0,419.7 192.0,420.1 193.0,419.2 194.0,420.0 195.0,422.2 196.0,422.1 197.0,421.0 198.0,420.5 199.0,419.9 200.0,419.0 201.0,419.7 202.0,421.6 203.0,421.9 204.0,420.1 205.0,421.6 206.0,421.6 207.0,421.3 208.0,421.2 209.0,421.5 210.0,420.1 211.0,421.4 212.0,419.9 213.0,420.6 214.0,421.6 215.0,421.4 216.0,419.9 217.0,422.3 218.0,421.2 219.0,421.0 220.0,419.0 221.0,420.9 222.0,419.8 223.0,421.4 224.0,420.6 225.0,421.9 226.0,421.3 227.0,421.9 228.0,420.3 229.0,421.3 230.0,421.7 231.0,422.0 232.0,420.3 233.0,422.1 234.0,422.2 235.0,421.5 236.0,422.6 237.0,422.5 238.0,421.0 239.0,421.0 240.0,419.7 241.0,422.1 242.0,422.5 243.0,420.9 244.0,421.6 245.0,421.8 246.0,421.8 247.0,419.8 248.0,422.0 249.0,421.3 250.0,421.6 251.0,420.7 252.0,421.5 253.0,422.0 254.0,421.6 255.0,421.9 256.0,419.4 257.0,419.9 258.0,420.9 259.0,421.6 260.0,420.1 261.0,421.8 262.0,421.6 263.0,419.5 264.0,421.1 265.0,420.2 266.0,419.6 267.0,419.9 268.0,420.5 269.0,420.1 270.0,420.1 271.0,419.6 272.0,421.1 273.0,420.8 274.0,421.7 275.0,421.6 276.0,420.3 277.0,422.7 278.0,419.5 279.0,421.0 280.0,420.5 281.0,421.0 282.0,419.9 283.0,422.5 284.0,420.9 285.0,419.7 286.0,421.8 287.0,419.9 288.0,421.6 289.0,420.8 290.0,421.7 291.0,423.1 292.0,422.6 293.0,421.2 294.0,422.6 295.0,422.0 296.0,421.0 297.0,420.2 298.0,421.8 299.0,421.7 300.0,423.2 301.0,423.2 302.0,421.9 303.0,421.0 304.0,423.0 305.0,419.8 306.0,420.2 307.0,421.8 308.0,422.0 309.0,420.3 310.0,422.1 311.0,423.0 312.0,421.2 313.0,421.4 314.0,420.7 315.0,420.9 316.0,423.4 317.0,421.2 318.0,423.3 319.0,423.2 320.0,422.1 321.0,420.9 322.0,423.5 323.0,421.7 324.0,421.4 325.0,421.1 326.0,423.5 327.0,421.7 328.0,421.0 329.0,421.7 330.0,420.4 331.0,422.3 332.0,421.6 333.0,421.1 334.0,422.9 335.0,423.0 336.0,420.1 337.0,422.0 338.0,421.1 339.0,423.5 340.0,422.9 341.0,421.0 342.0,421.1 343.0,420.7 344.0,423.7 345.0,421.2 346.0,422.4 347.0,421.9 348.0,422.5 349.0,422.4 350.0,422.9 351.0,420.6 352.0,423.0 353.0,421.3 354.0,422.2 355.0,421.5 356.0,421.3 357.0,422.2 358.0,422.0 359.0,421.6 360.0,423.0 361.0,422.4 362.0,420.5 363.0,421.2 364.0,422.0 365.0,423.7 366.0,423.6 367.0,422.3 368.0,420.4 369.0,423.2 370.0,421.9 371.0,422.5 372.0,423.0 373.0,422.7 374.0,422.2 375.0,423.7 376.0,421.9 377.0,421.9 378.0,423.5 379.0,421.2 380.0,421.6 381.0,423.5 382.0,420.8 383.0,423.5 384.0,423.0 385.0,422.1 386.0,421.6 387.0,423.4 388.0,423.9 389.0,421.1 390.0,422.3 391.0,422.6 392.0,422.4 393.0,421.8 394.0,421.2 395.0,422.8 396.0,423.6 397.0,420.9 398.0,421.5 399.0,423.6 400.0,423.6 401.0,423.1 402.0,420.8 403.0,423.3 404.0,424.2 405.0,424.3 406.0,423.3 407.0,420.9 408.0,423.8 409.0,421.5 410.0,423.1 411.0,424.2 412.0,423.3 413.0,421.3 414.0,421.8 415.0,424.1 416.0,421.3 417.0,423.0 418.0,422.3 419.0,421.4 420.0,423.0 421.0,421.0 422.0,421.2 423.0,422.2 424.0,421.1 425.0,421.0 426.0,422.9 427.0,423.5 428.0,424.0 429.0,421.3 430.0,422.4 431.0,422.0 432.0,423.0 433.0,422.6 434.0,424.3 435.0,422.2 436.0,421.1 437.0,423.4 438.0,421.4 439.0,423.2 440.0,422.7 441.0,424.2 442.0,422.9 443.0,423.2 444.0,421.9 445.0,422.9 446.0,421.9 447.0,423.7 448.0,422.8 449.0,421.4 450.0,421.8 451.0,422.3 452.0,423.6 453.0,421.6 454.0,423.6 455.0,423.3 456.0,421.3 457.0,423.4 458.0,421.3 459.0,421.5 460.0,423.2 461.0,421.9 462.0,424.2 463.0,422.8 464.0,422.2 465.0,423.9 466.0,421.2 467.0,423.7 468.0,421.3 469.0,421.6 470.0,424.5 471.0,423.5 472.0,421.9 473.0,421.5 474.0,424.6 475.0,423.5 476.0,424.1 477.0,421.6 478.0,423.4 479.0,422.4 480.0,422.0 481.0,422.3 482.0,423.3 483.0,422.4 484.0,422.5 485.0,421.6 486.0,424.1 487.0,423.5 488.0,424.1 489.0,422.7 490.0,424.2 491.0,423.0 492.0,423.3 493.0,423.3 494.0,423.9 495.0,422.6 496.0,421.6 497.0,421.3 498.0,421.9 499.0,421.4 500.0,424.4 501.0,423.0 502.0,424.0 503.0,421.2 504.0,422.9 505.0,424.5 506.0,423.5 507.0,422.8 508.0,422.9 509.0,421.6 510.0,421.8 511.0,421.9 512.0,422.6 513.0,422.7 514.0,424.5 515.0,421.9 516.0,422.2 517.0,422.3 518.0,421.9 519.0,422.4 520.0,422.2 521.0,423.1 522.0,421.5 523.0,424.7 524.0,422.7 525.0,424.7 526.0,423.8 527.0,423.8 528.0,423.1 529.0,424.8 530.0,421.8 531.0,423.8 532.0,422.4 533.0,423.8 534.0,424.0 535.0,422.0 536.0,422.1 537.0,421.5 538.0,422.3 539.0,421.7 540.0,422.9 541.0,424.9 542.0,422.8 543.0,422.6 544.0,423.1 545.0,422.5 546.0,424.1 547.0,424.1 548.0,422.1 549.0,422.4 550.0,423.9 551.0,424.9 552.0,423.8 553.0,423.1 554.0,425.0 555.0,421.5 556.0,421.7 557.0,424.3 558.0,423.0 559.0,421.7 560.0,423.5 561.0,425.1 562.0,423.4 563.0,422.8 564.0,421.9 565.0,421.8 566.0,424.8 567.0,423.4 568.0,425.0 569.0,421.8 570.0,422.5 571.0,421.8 572.0,423.0 573.0,421.8 574.0,422.5 575.0,423.1 576.0,422.7 577.0,421.8 578.0,421.8 579.0,425.1 580.0,422.3 581.0,423.5 582.0,423.1 583.0,423.6 584.0,422.0 585.0,422.8 586.0,422.1 587.0,423.6 588.0,425.0 589.0,423.9 590.0,424.8 591.0,422.5 592.0,421.8 593.0,423.7 594.0,423.5 595.0,423.8 596.0,423.1 597.0,424.0 598.0,424.4 599.0,425.0 600.0,422.9 601.0,423.4 602.0,424.7 603.0,422.6 604.0,422.2 605.0,422.9 606.0,422.1 607.0,424.6 608.0,424.7 609.0,422.9 610.0,422.3 611.0,422.1 612.0,422.7 613.0,422.1 614.0,423.4 615.0,423.9 616.0,422.7 617.0,422.1 618.0,424.4 619.0,422.0 620.0,422.6 621.0,422.9 622.0,423.2 623.0,422.2 624.0,423.4 625.0,423.0 626.0,424.6 627.0,423.9 628.0,425.1 629.0,424.3 630.0,424.6 631.0,424.0 632.0,423.5 633.0,424.9 634.0,424.3 635.0,425.4 636.0,424.6 637.0,424.5 638.0,422.9 639.0,424.9 640.0,423.3 641.0,422.4 642.0,422.2 643.0,422.6 644.0,422.9 645.0,424.4 646.0,423.0 647.0,422.2 648.0,424.8 649.0,424.0 650.0,422.1 651.0,422.2 652.0,422.5 653.0,423.3 654.0,425.1 655.0,425.5 656.0,424.3 657.0,422.9 658.0,423.6 659.0,423.4 660.0,423.3 661.0,422.1 662.0,424.2 663.0,425.1 664.0,424.7 665.0,422.4 666.0,424.0 667.0,422.7 668.0,424.7 669.0,423.7 670.0,425.5 671.0,425.0 672.0,422.6 673.0,423.3 674.0,425.4 675.0,423.8 676.0,423.7 677.0,423.8 678.0,424.9 679.0,425.5 680.0,424.1 681.0,425.7 682.0,424.3 683.0,422.6 684.0,424.0 685.0,429.3 686.0,434.7 687.0,440.0 688.0,443.3 689.0,446.7 690.0,451.1 691.0,449.7 692.0,448.4 693.0,451.7 694.0,448.3 695.0,450.3 696.0,449.9 697.0,451.4 698.0,449.6 699.0,449.0 700.0,449.2 701.0,448.9 702.0,450.2 703.0,449.5 704.0,450.9 705.0,449.1 706.0,449.5 707.0,449.1 708.0,451.7 709.0,451.2 710.0,451.3 711.0,450.4 712.0,449.6 713.0,448.7 714.0,451.2 715.0,450.0 716.0,448.3 717.0,448.8 718.0,448.6 719.0,450.8 720.0,451.4 721.0,448.9 722.0,451.1 723.0,449.4 724.0,450.7 725.0,451.3 726.0,450.4 727.0,451.1 728.0,449.6 729.0,448.2 730.0,450.0 731.0,450.3 732.0,448.9 733.0,449.6 734.0,449.3 735.0,448.3 736.0,449.3 737.0,449.6 738.0,449.9 739.0,450.7 740.0,449.6 741.0,451.7 742.0,451.1 743.0,451.5 744.0,450.7 745.0,450.6 746.0,450.1 747.0,451.1 748.0,449.5 749.0,450.3 750.0,450.6 751.0,450.1 752.0,449.2 753.0,448.5 754.0,448.5 755.0,449.5 756.0,450.3 757.0,450.9 758.0,450.8 759.0,449.3 760.0,451.5 761.0,449.2 762.0,450.8 763.0,448.5 764.0,450.9 765.0,450.6 766.0,451.6 767.0,451.4 768.0,450.7 769.0,451.2 770.0,450.9 771.0,450.4 772.0,449.0 773.0,450.1 774.0,451.4 775.0,449.1 776.0,451.7 777.0,450.2 778.0,449.6 779.0,448.2 780.0,449.6 781.0,448.8 782.0,450.6 783.0,451.4 784.0,451.5 785.0,450.4 786.0,449.6 787.0,448.6 788.0,450.7 789.0,450.2 790.0,450.8 791.0,449.5 792.0,451.4 793.0,449.0 794.0,449.3 795.0,449.2 796.0,450.4 797.0,451.4 798.0,448.8 799.0,450.5 800.0,451.0 801.0,449.0 802.0,448.4 803.0,450.2 804.0,451.2 805.0,451.4 806.0,450.8 807.0,449.7 808.0,449.7 809.0,450.1 810.0,451.5 811.0,449.3 812.0,449.2 813.0,450.4 814.0,451.7 815.0,448.9 816.0,448.3 817.0,448.6 818.0,450.2 819.0,450.4 820.0,448.9 821.0,448.9 822.0,450.3 823.0,450.5 824.0,450.7 825.0,450.8 826.0,448.4 827.0,449.9 828.0,451.2 829.0,451.6 830.0,449.3 831.0,451.3 832.0,450.5 833.0,451.5 834.0,449.0 835.0,450.7 836.0,451.2 837.0,449.9 838.0,448.6 839.0,448.9 840.0,448.8 841.0,448.5 842.0,448.7 843.0,450.4 844.0,448.6 845.0,450.9 846.0,450.9 847.0,451.1 848.0,451.1 849.0,450.8 850.0,451.5 851.0,451.6 852.0,450.5 853.0,451.7 854.0,448.6 855.0,448.6 856.0,448.4 857.0,448.9 858.0,449.5 859.0,449.9 860.0,450.6 861.0,450.9 862.0,448.5 863.0,449.7 864.0,450.2 865.0,449.6 866.0,448.6 867.0,450.3 868.0,449.5 869.0,450.7 870.0,450.0 871.0,451.7 872.0,451.6 873.0,448.5 874.0,450.9 875.0,450.8 876.0,449.3 877.0,448.6 878.0,449.9 879.0,449.5 880.0,450.9 881.0,451.5 882.0,449.6 883.0,449.2 884.0,450.0 885.0,450.7 886.0,451.0 887.0,450.3 888.0,449.3 889.0,449.4 890.0,451.3 891.0,450.1 892.0,448.4 893.0,449.7 894.0,449.1 895.0,450.6 896.0,448.5 897.0,449.2 898.0,448.5 899.0,449.9 900.0,451.7 901.0,450.1 902.0,449.6 903.0,451.6 904.0,448.5 905.0,449.5 906.0,451.1 907.0,450.0 908.0,446.2 909.0,442.4 910.0,438.6 911.0,434.8 912.0,429.2 913.0,432.0 914.0,430.5 915.0,429.3 916.0,430.1 917.0,430.8 918.0,430.6 919.0,431.1 920.0,429.4 921.0,430.0 922.0,432.7 923.0,430.8 924.0,430.9 925.0,429.5 926.0,430.2 927.0,432.6 928.0,431.7 929.0,431.0 930.0,429.4 931.0,430.6 932.0,432.0 933.0,430.8 934.0,431.3 935.0,432.4 936.0,431.5 937.0,431.5 938.0,429.3 939.0,429.3 940.0,432.0 941.0,430.7 942.0,432.3 943.0,432.2 944.0,432.5 945.0,430.6 946.0,432.8 947.0,431.9 948.0,432.4 949.0,429.7 950.0,432.0 951.0,430.7 952.0,432.7 953.0,432.8 954.0,430.0 955.0,430.7 956.0,430.2 957.0,430.9 958.0,430.2 959.0,431.6 960.0,429.6 961.0,429.8 962.0,430.8 963.0,429.5 964.0,430.6 965.0,432.4 966.0,432.4 967.0,429.9 968.0,429.3 969.0,432.2 970.0,432.7 971.0,431.4 972.0,429.7 973.0,430.1 974.0,432.5 975.0,432.6 976.0,429.3 977.0,429.9 978.0,430.7 979.0,430.2 980.0,431.9 981.0,430.5 982.0,432.0 983.0,429.7 984.0,431.1 985.0,432.7 986.0,431.7 987.0,429.5 988.0,429.6 989.0,431.5 990.0,430.5 991.0,430.5 992.0,430.9 993.0,431.3 994.0,432.7 995.0,430.1 996.0,431.2 997.0,430.1 998.0,431.2 999.0,431.8 1000.0,429.7 1001.0,430.9 1002.0,431.7 1003.0,429.2 1004.0,432.0 1005.0,430.7 1006.0,431.0 1007.0,431.4 1008.0,432.1 1009.0,429.4 1010.0,431.0 1011.0,429.3 1012.0,430.6 1013.0,430.4 1014.0,429.3 1015.0,430.3 1016.0,430.8 1017.0,431.6 1018.0,432.5 1019.0,430.5 1020.0,431.1 1021.0,431.8 1022.0,432.6 1023.0,432.6 1024.0,432.8 1025.0,430.3 1026.0,429.8 1027.0,432.6 1028.0,429.5 1029.0,430.8 1030.0,431.9 1031.0,431.1 1032.0,430.6 1033.0,432.5 1034.0,430.3 1035.0,431.2 1036.0,432.2 1037.0,429.7 1038.0,430.5 1039.0,431.0 1040.0,431.2 1041.0,429.9 1042.0,430.8 1043.0,429.4 1044.0,429.5 1045.0,430.4 1046.0,429.7 1047.0,432.7 1048.0,430.1 1049.0,430.2 1050.0,432.0 1051.0,431.9 1052.0,430.1 1053.0,432.2 1054.0,431.5 1055.0,430.6 1056.0,431.5 1057.0,430.1 1058.0,430.1 1059.0,432.4 1060.0,430.8 1061.0,432.4 1062.0,429.8 1063.0,429.7 1064.0,429.4 1065.0,431.9 1066.0,431.2 1067.0,429.2 1068.0,429.4 1069.0,432.2 1070.0,431.0 1071.0,432.3 1072.0,429.3 1073.0,431.3 1074.0,429.6 1075.0,431.8 1076.0,431.4 1077.0,431.4 1078.0,430.0 1079.0,432.6 1080.0,429.6 1081.0,429.4 1082.0,431.7 1083.0,429.5 1084.0,429.4 1085.0,430.9 1086.0,431.5 1087.0,432.4 1088.0,431.8 1089.0,429.4 1090.0,431.5 1091.0,432.2 1092.0,429.6 1093.0,431.9 1094.0,430.1 1095.0,430.3 1096.0,429.2 1097.0,431.9 1098.0,431.1 1099.0,432.4 1100.0,430.9 1101.0,429.8 1102.0,430.0 1103.0,430.1 1104.0,432.6 1105.0,429.9 1106.0,429.5 1107.0,430.5 1108.0,429.5 1109.0,430.7 1110.0,431.4 1111.0,431.5 1112.0,429.8 1113.0,429.7 1114.0,431.0 1115.0,431.7 1116.0,430.8 1117.0,431.3 1118.0,432.5 1119.0,429.7 1120.0,430.2 1121.0,431.0 1122.0,431.1 1123.0,432.4 1124.0,431.2 1125.0,431.6 1126.0,430.7 1127.0,432.0 1128.0,432.2 1129.0,430.3 1130.0,429.6 1131.0,430.1 1132.0,430.5 1133.0,431.0 1134.0,429.3 1135.0,427.7 1136.0,427.4 1137.0,425.2 1138.0,426.5 1139.0,426.5 1140.0,427.6 1141.0,424.6 1142.0,427.0 1143.0,425.4 1144.0,424.6 1145.0,426.5 1146.0,427.2 1147.1,426.3 1148.1,424.4 1149.1,427.7 1150.1,425.6 1151.1,426.5 1152.1,426.8 1153.1,425.1 1154.1,425.7 1155.1,425.4 1156.1,424.5 1157.1,424.4 1158.1,426.8 1159.1,425.7 1160.1,427.3 1161.1,424.4 1162.1,425.3 1163.1,424.8 1164.1,427.6 1165.1,427.0 1166.1,427.4 1167.2,426.0 1168.2,424.6 1169.2,425.7 1170.2,425.0 1171.2,424.3 1172.2,426.2 1173.2,425.2 1174.2,424.6 1175.2,426.0 1176.2,427.6 1177.2,427.6 1178.2,425.9 1179.2,424.6 1180.2,427.0 1181.2,424.6 1182.2,426.1 1183.2,424.5 1184.2,427.8 1185.2,426.2 1186.2,425.8 1187.2,425.2 1188.3,426.2 1189.3,427.7 1190.3,425.7 1191.3,425.0 1192.3,426.1 1193.3,427.5 1194.3,425.6 1195.3,426.5 1196.3,427.5 1197.3,425.4 1198.3,427.1 1199.3,426.1 1200.3,424.7 1201.3,424.4 1202.3,427.6 1203.3,425.9 1204.3,425.8 1205.3,427.5 1206.3,426.3 1207.3,426.0 1208.4,425.2 1209.4,426.9 1210.4,425.1 1211.4,425.9 1212.4,426.9 1213.4,426.4 1214.4,424.7 1215.4,424.9 1216.4,426.7 1217.4,426.8 1218.4,424.6 1219.4,427.8 1220.4,424.7 1221.4,424.8 1222.4,424.5 1223.4,425.8 1224.4,426.4 1225.4,427.3 1226.4,424.8 1227.4,426.7 1228.5,424.6 1229.5,426.3 1230.5,425.1 1231.5,425.5 1232.5,424.4 1233.5,426.8 1234.5,424.6 1235.5,427.0 1236.5,425.4 1237.5,426.3 1238.5,426.0 1238.5,368.0" fill="none" stroke="#eaea78" stroke-width="1.2"/>
<path d="M34 300.5 H40 M37 298 L40 300.5 L37 303" stroke="#e8e0b0" stroke-width="1" fill="none"/>
<path d="M34 318.5 H40 M37 316 L40 318.5 L37 321" stroke="#c0e8e8" stroke-width="1" fill="none"/>
<path d="M40.5 525 V531 M37 534.5 L40.5 527 L44 534.5 Z" stroke="#d0c8f0" fill="#d0c8f0" stroke-width="1"/>
<path d="M440.5 526 V535 M441 530.5 H809" stroke="#a8a8a8" stroke-width="1"/>
<path d="M812 530.5 H1237" stroke="#b898e0" stroke-width="1.2"/>
<path d="M812 525.5 H809.5 V535.5 H812" stroke="#a0d0c0" fill="none" stroke-width="1"/>
<path d="M1234 525.5 H1237.5 V535.5 H1234 M1240.5 526 V535" stroke="#a0d0c0" fill="none" stroke-width="1"/>
</svg>
<div class="t" style="left:23px;top:296px;font-size:10px;color:#f0e8b8">C1</div>
<div class="t" style="left:21px;top:314px;font-size:10px;color:#c8f0f0">C2</div>
<div class="t" style="left:227px;top:525px;font-size:11px;color:#f06040">40 ns</div>
<div style="position:absolute;left:12px;top:560px;width:800px;height:51px;border:1px solid #f0f0f0;border-radius:3px"></div>
<div style="position:absolute;left:20px;top:550px;width:46px;height:18px;border:1px solid #f0f0f0;border-radius:4px;background:#4a7ae8"></div>
<div class="t" style="left:25px;top:554px;font-size:11.5px;font-weight:bold;color:#fff">Scales</div>
<div style="position:absolute;left:678px;top:550px;width:30px;height:18px;border:1px solid #f0f0f0;border-radius:4px;background:#000"></div>
<div class="t" style="left:680px;top:554px;font-size:11px;font-weight:bold;color:#f0f0f0;width:26px;text-align:center">Auto</div>
<div style="position:absolute;left:710px;top:550px;width:30px;height:18px;border:1px solid #f0f0f0;border-radius:4px;background:#000"></div>
<div class="t" style="left:712px;top:554px;font-size:11px;font-weight:bold;color:#f0f0f0;width:26px;text-align:center">Max</div>
<div style="position:absolute;left:742px;top:550px;width:29px;height:18px;border:1px solid #f0f0f0;border-radius:4px;background:#000"></div>
<div class="t" style="left:744px;top:554px;font-size:11px;font-weight:bold;color:#f0f0f0;width:25px;text-align:center">Mid</div>
<div style="position:absolute;left:775px;top:550px;width:29px;height:18px;border:1px solid #f0f0f0;border-radius:4px;background:#4a7ae8"></div>
<div class="t" style="left:777px;top:554px;font-size:11px;font-weight:bold;color:#f0f0f0;width:25px;text-align:center">Min</div>
<div style="position:absolute;left:801px;top:574px;width:4px;height:21px;background:#3c4646"></div>
<div class="t" style="left:16px;top:590px;font-size:11px;font-weight:bold;color:#e8e880">Channel 1</div>
<div class="t" style="left:171px;top:574px;font-size:11px;font-weight:bold;color:#e8e8f8">Vertical Scale</div>
<div class="t" style="left:171px;top:590px;font-size:11px;font-weight:bold;color:#e0e878">56.461 mV/div</div>
<div class="t" style="left:321px;top:574px;font-size:11px;font-weight:bold;color:#e8e8f8">Offset + Position</div>
<div class="t" style="left:321px;top:590px;font-size:11px;font-weight:bold;color:#e0e878">-24.332 mV</div>
<div class="t" style="left:471px;top:574px;font-size:11px;font-weight:bold;color:#e8e8f8">Horizontal Scale</div>
<div class="t" style="left:471px;top:590px;font-size:11px;font-weight:bold;color:#e0e878">1.0746 ns/div</div>
<div class="t" style="left:621px;top:574px;font-size:11px;font-weight:bold;color:#e8e8f8">Delay + Position</div>
<div class="t" style="left:621px;top:590px;font-size:11px;font-weight:bold;color:#e0e878">9.2108 ns</div>
<div style="position:absolute;left:8px;top:614px;width:1273px;height:146px;background:#c1cdcd"></div>
<div style="position:absolute;left:8px;top:613px;width:1273px;height:1px;background:#eef6f6"></div>
<div style="position:absolute;left:11px;top:617px;width:29px;height:58px;border:1px solid #1a3a9a;border-radius:4px;background:linear-gradient(#3264ec,#4a84f4 50%,#609cf8)"></div>
<div class="t" style="left:15px;top:627px;font-size:11px;font-weight:bold;color:#fff">Ch1</div>
<div style="position:absolute;left:19px;top:654px;width:12px;height:10px;border:1px solid #203040;background:#f0e860"></div>
<div style="position:absolute;left:140px;top:617px;width:29px;height:58px;border:1px solid #1a3a9a;border-radius:4px;background:linear-gradient(#3264ec,#4a84f4 50%,#609cf8)"></div>
<div class="t" style="left:144px;top:627px;font-size:11px;font-weight:bold;color:#fff">Ch2</div>
<div style="position:absolute;left:148px;top:654px;width:12px;height:10px;border:1px solid #203040;background:#a0f0e8"></div>
<div style="position:absolute;left:44px;top:618px;width:91px;height:40px;border-radius:4px;border:1px solid #2a3030;background:#000;overflow:hidden;box-shadow:0 0 0 1.5px #4a80f0,0 0 2px 2px #80a8ff;">
<div style="position:absolute;left:0;top:18px;width:100%;height:4px;background:#d4d8d8"></div>
<div style="position:absolute;left:0;top:18px;width:45px;height:4px;background:#6c48e4"></div>
<div style="position:absolute;left:0;top:22px;width:100%;height:17px;background:linear-gradient(#ffffff,#eef0f0 40%,#cdd3d3)"></div>
<div style="position:absolute;left:0px;top:22px;width:19px;height:17px;border-right:1px solid #3a4040;display:flex;align-items:center;justify-content:center"><svg width="7" height="5" style="display:block;margin-top:-1px"><path d="M0 0 H7 L3.5 5 Z" fill="#000"/></svg></div>
<div style="position:absolute;left:19px;top:22px;width:19px;height:17px;border-right:1px solid #3a4040;display:flex;align-items:center;justify-content:center"><svg width="7" height="5" style="display:block;margin-top:-1px"><path d="M0 5 H7 L3.5 0 Z" fill="#000"/></svg></div>
<div style="position:absolute;left:38px;top:22px;width:15px;height:17px;border-right:1px solid #3a4040;display:flex;align-items:center;justify-content:center"><span style="font:bold 11px Liberation Sans;color:#000;transform:scaleX(0.95);display:block;margin-top:-1px">D</span></div>
<div style="position:absolute;left:53px;top:22px;width:19px;height:17px;border-right:1px solid #3a4040;display:flex;align-items:center;justify-content:center"><svg width="10" height="7" style="display:block;margin-top:-1px"><path d="M0 0 H10 L5.0 7 Z" fill="#000"/></svg></div>
<div style="position:absolute;left:72px;top:22px;width:19px;height:17px;border-right:1px solid #3a4040;display:flex;align-items:center;justify-content:center"><svg width="10" height="7" style="display:block;margin-top:-1px"><path d="M0 7 H10 L5.0 0 Z" fill="#000"/></svg></div>
</div>
<div class="t" style="left:48px;top:623px;font-size:11px;font-weight:bold;color:#f0f080">10 Ohm/div</div>
<div style="position:absolute;left:44px;top:663px;width:91px;height:40px;border-radius:4px;border:1px solid #2a3030;background:#000;overflow:hidden;">
<div style="position:absolute;left:0;top:18px;width:100%;height:4px;background:#d4d8d8"></div>
<div style="position:absolute;left:44px;top:18px;width:1px;height:4px;background:#d03030"></div>
<div style="position:absolute;left:0;top:22px;width:100%;height:17px;background:linear-gradient(#ffffff,#eef0f0 40%,#cdd3d3)"></div>
<div style="position:absolute;left:0px;top:22px;width:19px;height:17px;border-right:1px solid #3a4040;display:flex;align-items:center;justify-content:center"><svg width="7" height="5" style="display:block;margin-top:-1px"><path d="M0 0 H7 L3.5 5 Z" fill="#000"/></svg></div>
<div style="position:absolute;left:19px;top:22px;width:19px;height:17px;border-right:1px solid #3a4040;display:flex;align-items:center;justify-content:center"><svg width="7" height="5" style="display:block;margin-top:-1px"><path d="M0 5 H7 L3.5 0 Z" fill="#000"/></svg></div>
<div style="position:absolute;left:38px;top:22px;width:15px;height:17px;border-right:1px solid #3a4040;display:flex;align-items:center;justify-content:center"><span style="font:bold 11px Liberation Sans;color:#000;transform:scaleX(0.95);display:block;margin-top:-1px">D</span></div>
<div style="position:absolute;left:53px;top:22px;width:19px;height:17px;border-right:1px solid #3a4040;display:flex;align-items:center;justify-content:center"><svg width="10" height="7" style="display:block;margin-top:-1px"><path d="M0 0 H10 L5.0 7 Z" fill="#000"/></svg></div>
<div style="position:absolute;left:72px;top:22px;width:19px;height:17px;border-right:1px solid #3a4040;display:flex;align-items:center;justify-content:center"><svg width="10" height="7" style="display:block;margin-top:-1px"><path d="M0 7 H10 L5.0 0 Z" fill="#000"/></svg></div>
</div>
<div class="t" style="left:48px;top:668px;font-size:11px;font-weight:bold;color:#f0f080">&nbsp;0 Ohm</div>
<div style="position:absolute;left:173px;top:618px;width:91px;height:40px;border-radius:4px;border:1px solid #2a3030;background:#000;overflow:hidden;">
<div style="position:absolute;left:0;top:18px;width:100%;height:4px;background:#d4d8d8"></div>
<div style="position:absolute;left:0;top:18px;width:45px;height:4px;background:#6c48e4"></div>
<div style="position:absolute;left:0;top:22px;width:100%;height:17px;background:linear-gradient(#ffffff,#eef0f0 40%,#cdd3d3)"></div>
<div style="position:absolute;left:0px;top:22px;width:19px;height:17px;border-right:1px solid #3a4040;display:flex;align-items:center;justify-content:center"><svg width="7" height="5" style="display:block;margin-top:-1px"><path d="M0 0 H7 L3.5 5 Z" fill="#000"/></svg></div>
<div style="position:absolute;left:19px;top:22px;width:19px;height:17px;border-right:1px solid #3a4040;display:flex;align-items:center;justify-content:center"><svg width="7" height="5" style="display:block;margin-top:-1px"><path d="M0 5 H7 L3.5 0 Z" fill="#000"/></svg></div>
<div style="position:absolute;left:38px;top:22px;width:15px;height:17px;border-right:1px solid #3a4040;display:flex;align-items:center;justify-content:center"><span style="font:bold 11px Liberation Sans;color:#000;transform:scaleX(0.95);display:block;margin-top:-1px">D</span></div>
<div style="position:absolute;left:53px;top:22px;width:19px;height:17px;border-right:1px solid #3a4040;display:flex;align-items:center;justify-content:center"><svg width="10" height="7" style="display:block;margin-top:-1px"><path d="M0 0 H10 L5.0 7 Z" fill="#000"/></svg></div>
<div style="position:absolute;left:72px;top:22px;width:19px;height:17px;border-right:1px solid #3a4040;display:flex;align-items:center;justify-content:center"><svg width="10" height="7" style="display:block;margin-top:-1px"><path d="M0 7 H10 L5.0 0 Z" fill="#000"/></svg></div>
</div>
<div class="t" style="left:177px;top:623px;font-size:11px;font-weight:bold;color:#a0f0e0">10 Ohm/div</div>
<div style="position:absolute;left:173px;top:663px;width:91px;height:40px;border-radius:4px;border:1px solid #2a3030;background:#000;overflow:hidden;">
<div style="position:absolute;left:0;top:18px;width:100%;height:4px;background:#d4d8d8"></div>
<div style="position:absolute;left:44px;top:18px;width:1px;height:4px;background:#d03030"></div>
<div style="position:absolute;left:0;top:22px;width:100%;height:17px;background:linear-gradient(#ffffff,#eef0f0 40%,#cdd3d3)"></div>
<div style="position:absolute;left:0px;top:22px;width:19px;height:17px;border-right:1px solid #3a4040;display:flex;align-items:center;justify-content:center"><svg width="7" height="5" style="display:block;margin-top:-1px"><path d="M0 0 H7 L3.5 5 Z" fill="#000"/></svg></div>
<div style="position:absolute;left:19px;top:22px;width:19px;height:17px;border-right:1px solid #3a4040;display:flex;align-items:center;justify-content:center"><svg width="7" height="5" style="display:block;margin-top:-1px"><path d="M0 5 H7 L3.5 0 Z" fill="#000"/></svg></div>
<div style="position:absolute;left:38px;top:22px;width:15px;height:17px;border-right:1px solid #3a4040;display:flex;align-items:center;justify-content:center"><span style="font:bold 11px Liberation Sans;color:#000;transform:scaleX(0.95);display:block;margin-top:-1px">D</span></div>
<div style="position:absolute;left:53px;top:22px;width:19px;height:17px;border-right:1px solid #3a4040;display:flex;align-items:center;justify-content:center"><svg width="10" height="7" style="display:block;margin-top:-1px"><path d="M0 0 H10 L5.0 7 Z" fill="#000"/></svg></div>
<div style="position:absolute;left:72px;top:22px;width:19px;height:17px;border-right:1px solid #3a4040;display:flex;align-items:center;justify-content:center"><svg width="10" height="7" style="display:block;margin-top:-1px"><path d="M0 7 H10 L5.0 0 Z" fill="#000"/></svg></div>
</div>
<div class="t" style="left:177px;top:668px;font-size:11px;font-weight:bold;color:#a0f0e0">&nbsp;0 Ohm</div>
<div style="position:absolute;left:419px;top:617px;width:30px;height:58px;border:1px solid #3a4444;border-radius:4px;overflow:hidden;background:#fff"><div style="position:absolute;left:0;top:0;width:100%;height:19px;background:linear-gradient(#fff,#e6eaea 50%,#c8d0d0);border-bottom:1px solid #3a4444"></div><div style="position:absolute;left:0;top:19px;width:100%;height:19px;background:linear-gradient(#fff,#e6eaea 50%,#c8d0d0);border-bottom:1px solid #3a4444"></div><div style="position:absolute;left:0;top:38px;width:100%;height:20px;background:linear-gradient(#2a60e0,#4a88f0 50%,#6aa8f8)"></div></div>
<div class="t" style="left:429px;top:623px;font-size:11px;font-weight:bold;color:#000">A</div>
<div class="t" style="left:422px;top:642px;font-size:11px;font-weight:bold;color:#000">A+B</div>
<div class="t" style="left:430px;top:661px;font-size:11px;font-weight:bold;color:#fff">B</div>
<div style="position:absolute;left:452px;top:618px;width:92px;height:40px;border-radius:4px;border:1px solid #2a3030;background:#000;overflow:hidden;">
<div style="position:absolute;left:0;top:18px;width:100%;height:4px;background:#d4d8d8"></div>
<div style="position:absolute;left:0;top:18px;width:81px;height:4px;background:#6c48e4"></div>
<div style="position:absolute;left:0;top:22px;width:100%;height:17px;background:linear-gradient(#ffffff,#eef0f0 40%,#cdd3d3)"></div>
<div style="position:absolute;left:0px;top:22px;width:19px;height:17px;border-right:1px solid #3a4040;display:flex;align-items:center;justify-content:center"><svg width="6" height="7" style="display:block;margin-top:-1px"><path d="M6 0 V7 L0 3.5 Z" fill="#000"/></svg></div>
<div style="position:absolute;left:19px;top:22px;width:19px;height:17px;border-right:1px solid #3a4040;display:flex;align-items:center;justify-content:center"><svg width="6" height="7" style="display:block;margin-top:-1px"><path d="M0 0 V7 L6 3.5 Z" fill="#000"/></svg></div>
<div style="position:absolute;left:38px;top:22px;width:15px;height:17px;border-right:1px solid #3a4040;display:flex;align-items:center;justify-content:center"><span style="font:bold 11px Liberation Sans;color:#000;transform:scaleX(0.95);display:block;margin-top:-1px">D</span></div>
<div style="position:absolute;left:53px;top:22px;width:19px;height:17px;border-right:1px solid #3a4040;display:flex;align-items:center;justify-content:center"><svg width="7" height="9" style="display:block;margin-top:-1px"><path d="M7 0 V9 L0 4.5 Z" fill="#000"/></svg></div>
<div style="position:absolute;left:72px;top:22px;width:19px;height:17px;border-right:1px solid #3a4040;display:flex;align-items:center;justify-content:center"><svg width="7" height="9" style="display:block;margin-top:-1px"><path d="M0 0 V9 L7 4.5 Z" fill="#000"/></svg></div>
</div>
<div class="t" style="left:456px;top:623px;font-size:11px;font-weight:bold;color:#fff">1.0746 ns/div</div>
<div style="position:absolute;left:452px;top:663px;width:92px;height:40px;border-radius:4px;border:1px solid #2a3030;background:#000;overflow:hidden;">
<div style="position:absolute;left:0;top:18px;width:100%;height:4px;background:#d4d8d8"></div>
<div style="position:absolute;left:0;top:18px;width:92px;height:4px;background:#6c48e4"></div>
<div style="position:absolute;left:0;top:22px;width:100%;height:17px;background:linear-gradient(#ffffff,#eef0f0 40%,#cdd3d3)"></div>
<div style="position:absolute;left:0px;top:22px;width:19px;height:17px;border-right:1px solid #3a4040;display:flex;align-items:center;justify-content:center"><svg width="6" height="7" style="display:block;margin-top:-1px"><path d="M6 0 V7 L0 3.5 Z" fill="#000"/></svg></div>
<div style="position:absolute;left:19px;top:22px;width:19px;height:17px;border-right:1px solid #3a4040;display:flex;align-items:center;justify-content:center"><svg width="6" height="7" style="display:block;margin-top:-1px"><path d="M0 0 V7 L6 3.5 Z" fill="#000"/></svg></div>
<div style="position:absolute;left:38px;top:22px;width:15px;height:17px;border-right:1px solid #3a4040;display:flex;align-items:center;justify-content:center"><span style="font:bold 11px Liberation Sans;color:#000;display:block;margin-top:-1px">0</span></div>
<div style="position:absolute;left:53px;top:22px;width:19px;height:17px;border-right:1px solid #3a4040;display:flex;align-items:center;justify-content:center"><svg width="7" height="9" style="display:block;margin-top:-1px"><path d="M7 0 V9 L0 4.5 Z" fill="#000"/></svg></div>
<div style="position:absolute;left:72px;top:22px;width:19px;height:17px;border-right:1px solid #3a4040;display:flex;align-items:center;justify-content:center"><svg width="7" height="9" style="display:block;margin-top:-1px"><path d="M0 0 V9 L7 4.5 Z" fill="#000"/></svg></div>
</div>
<div class="t" style="left:456px;top:668px;font-size:11px;font-weight:bold;color:#fff">9.2108 ns</div>
<div style="position:absolute;left:556px;top:617px;width:157px;height:58px;border:1px solid #3a4444;border-radius:4px;overflow:hidden;background:#d0d6d6"><div style="position:absolute;left:0;top:0;width:79px;height:19px;background:linear-gradient(#fff,#e6eaea 50%,#c8d0d0);border-bottom:1px solid #3a4444;border-right:1px solid #3a4444"></div><div style="position:absolute;left:79px;top:0;width:78px;height:19px;background:linear-gradient(#fff,#e6eaea 50%,#c8d0d0);border-bottom:1px solid #3a4444"></div><div style="position:absolute;left:0;top:19px;width:79px;height:19px;background:linear-gradient(#fff,#e6eaea 50%,#c8d0d0);border-bottom:1px solid #3a4444;border-right:1px solid #3a4444"></div><div style="position:absolute;left:79px;top:19px;width:78px;height:19px;background:linear-gradient(#fff,#e6eaea 50%,#c8d0d0);border-bottom:1px solid #3a4444"></div><div style="position:absolute;left:0;top:38px;width:79px;height:20px;background:linear-gradient(#2a60e0,#4a88f0 50%,#6aa8f8)"></div><div style="position:absolute;left:79px;top:38px;width:78px;height:20px;background:#ccd4d4"></div></div>
<div class="t" style="left:570px;top:622px;font-size:11px;font-weight:bold;color:#101010">Ext Direct</div>
<div class="t" style="left:641px;top:622px;font-size:11px;font-weight:bold;color:#101010">Ext Prescale</div>
<div class="t" style="left:568px;top:641px;font-size:11px;font-weight:bold;color:#101010">Ch1 Direct</div>
<div class="t" style="left:646px;top:641px;font-size:11px;font-weight:bold;color:#101010">Ch2 Direct</div>
<div class="t" style="left:571px;top:660px;font-size:11px;font-weight:bold;color:#fff">Int Clock</div>
<div class="t" style="left:651px;top:660px;font-size:11px;font-weight:bold;color:#98a2a2">Auxiliary</div>
<div style="position:absolute;left:556px;top:684px;width:157px;height:20px;border:1px solid #b0baba;border-radius:4px;overflow:hidden;background:#c8d0d0"><div style="position:absolute;left:0;top:0;width:79px;height:20px;background:#bcc6c6;border-right:1px solid #a8b2b2"></div></div>
<svg style="position:absolute;left:561px;top:686px" width="22" height="16" viewBox="0 0 22 16"><rect x="2.5" y="3.5" width="15" height="9" rx="4" fill="none" stroke="#8c94e0" stroke-width="3"/><path d="M1 6 L6 1" stroke="#c4cccc" stroke-width="3"/></svg>
<div class="t" style="left:588px;top:689px;font-size:11px;font-weight:bold;color:#7c8686;letter-spacing:0.4px">Freerun</div>
<svg style="position:absolute;left:641px;top:686px" width="20" height="16" viewBox="0 0 20 16"><path d="M2 14 H9 V3 H17" stroke="#98a8d8" stroke-width="1.5" fill="none"/><path d="M4 8 H14 M6 6 L4 8 L6 10 M12 6 L14 8 L12 10" stroke="#e0a0a0" stroke-width="1.2" fill="none"/></svg>
<div class="t" style="left:666px;top:689px;font-size:11px;font-weight:bold;color:#8a9494">Trig'd</div>
<div class="t" style="left:719px;top:618px;font-size:12px;font-weight:bold;color:#101010">Internal Rate</div>
<div style="position:absolute;left:719px;top:634px;width:93px;height:40px;border-radius:4px;border:1px solid #2a3030;background:#000;overflow:hidden;">
<div style="position:absolute;left:0;top:18px;width:100%;height:4px;background:#d4d8d8"></div>
<div style="position:absolute;left:0;top:18px;width:42px;height:4px;background:#6c48e4"></div>
<div style="position:absolute;left:0;top:22px;width:100%;height:17px;background:linear-gradient(#ffffff,#eef0f0 40%,#cdd3d3)"></div>
<div style="position:absolute;left:0px;top:22px;width:20px;height:17px;border-right:1px solid #3a4040;display:flex;align-items:center;justify-content:center"><svg width="6" height="7" style="display:block;margin-top:-1px"><path d="M6 0 V7 L0 3.5 Z" fill="#000"/></svg></div>
<div style="position:absolute;left:20px;top:22px;width:20px;height:17px;border-right:1px solid #3a4040;display:flex;align-items:center;justify-content:center"><svg width="6" height="7" style="display:block;margin-top:-1px"><path d="M0 0 V7 L6 3.5 Z" fill="#000"/></svg></div>
<div style="position:absolute;left:40px;top:22px;width:13px;height:17px;border-right:1px solid #3a4040;display:flex;align-items:center;justify-content:center"><span style="font:bold 11px Liberation Sans;color:#000;transform:scaleX(0.95);display:block;margin-top:-1px">D</span></div>
<div style="position:absolute;left:53px;top:22px;width:20px;height:17px;border-right:1px solid #3a4040;display:flex;align-items:center;justify-content:center"><svg width="7" height="9" style="display:block;margin-top:-1px"><path d="M7 0 V9 L0 4.5 Z" fill="#000"/></svg></div>
<div style="position:absolute;left:73px;top:22px;width:20px;height:17px;border-right:1px solid #3a4040;display:flex;align-items:center;justify-content:center"><svg width="7" height="9" style="display:block;margin-top:-1px"><path d="M0 0 V9 L7 4.5 Z" fill="#000"/></svg></div>
</div>
<div class="t" style="left:723px;top:639px;font-size:11px;font-weight:bold;color:#fff">10 µs</div>
<div style="position:absolute;left:719px;top:684px;width:93px;height:20px;border:1px solid #b0baba;border-radius:4px;overflow:hidden;background:#c8d0d0"><div style="position:absolute;left:0;top:0;width:47px;height:20px;background:#b8c2c2;border-right:1px solid #a8b2b2"></div></div>
<div class="t" style="left:732px;top:689px;font-size:11px;font-weight:bold;color:#8a9494">Pos</div>
<div class="t" style="left:779px;top:689px;font-size:11px;font-weight:bold;color:#8a9494">Neg</div>
<div style="position:absolute;left:46px;top:710px;width:729px;height:39px;border:1px solid #3a4444;border-radius:4px;overflow:hidden">
<div style="position:absolute;left:0px;top:0px;width:105px;height:19px;background:linear-gradient(#ffffff,#f0f2f2 40%,#c4cccc);border-right:1px solid #3a4444;border-bottom:1px solid #3a4444;"></div>
<div style="position:absolute;left:0px;top:19px;width:105px;height:20px;background:linear-gradient(#ffffff,#f0f2f2 40%,#c4cccc);border-right:1px solid #3a4444;"></div>
<div style="position:absolute;left:105px;top:0px;width:105px;height:19px;background:linear-gradient(#ffffff,#f0f2f2 40%,#c4cccc);border-right:1px solid #3a4444;border-bottom:1px solid #3a4444;"></div>
<div style="position:absolute;left:105px;top:19px;width:105px;height:20px;background:linear-gradient(#ffffff,#f0f2f2 40%,#c4cccc);border-right:1px solid #3a4444;"></div>
<div style="position:absolute;left:210px;top:0px;width:104px;height:19px;background:linear-gradient(#ffffff,#f0f2f2 40%,#c4cccc);border-right:1px solid #3a4444;border-bottom:1px solid #3a4444;"></div>
<div style="position:absolute;left:210px;top:19px;width:104px;height:20px;background:linear-gradient(#ffffff,#f0f2f2 40%,#c4cccc);border-right:1px solid #3a4444;"></div>
<div style="position:absolute;left:314px;top:0px;width:103px;height:19px;background:linear-gradient(#ffffff,#f0f2f2 40%,#c4cccc);border-right:1px solid #3a4444;border-bottom:1px solid #3a4444;"></div>
<div style="position:absolute;left:314px;top:19px;width:103px;height:20px;background:linear-gradient(#ffffff,#f0f2f2 40%,#c4cccc);border-right:1px solid #3a4444;"></div>
<div style="position:absolute;left:417px;top:0px;width:105px;height:19px;background:linear-gradient(#ffffff,#f0f2f2 40%,#c4cccc);border-right:1px solid #3a4444;border-bottom:1px solid #3a4444;"></div>
<div style="position:absolute;left:417px;top:19px;width:105px;height:20px;background:linear-gradient(#ffffff,#f0f2f2 40%,#c4cccc);border-right:1px solid #3a4444;"></div>
<div style="position:absolute;left:522px;top:0px;width:103px;height:19px;background:linear-gradient(#ffffff,#f0f2f2 40%,#c4cccc);border-right:1px solid #3a4444;border-bottom:1px solid #3a4444;"></div>
<div style="position:absolute;left:522px;top:19px;width:103px;height:20px;background:linear-gradient(#ffffff,#f0f2f2 40%,#c4cccc);border-right:1px solid #3a4444;"></div>
<div style="position:absolute;left:625px;top:0px;width:104px;height:19px;background:linear-gradient(#ffffff,#f0f2f2 40%,#c4cccc);border-right:1px solid #3a4444;border-bottom:1px solid #3a4444;"></div>
<div style="position:absolute;left:625px;top:19px;width:104px;height:20px;background:linear-gradient(#ffffff,#f0f2f2 40%,#c4cccc);border-right:1px solid #3a4444;"></div>
</div>
<div class="t" style="left:77px;top:715px;font-size:11.3px;font-weight:bold;color:#101010">Channels</div>
<div class="t" style="left:77px;top:734px;font-size:11.3px;font-weight:bold;color:#101010">Mathematics</div>
<div class="t" style="left:182px;top:715px;font-size:11.3px;font-weight:bold;color:#101010">Acquisition</div>
<div class="t" style="left:182px;top:734px;font-size:11.3px;font-weight:bold;color:#101010">Histogram</div>
<div class="t" style="left:286px;top:715px;font-size:11.3px;font-weight:bold;color:#101010">Trigger</div>
<div class="t" style="left:286px;top:734px;font-size:11.3px;font-weight:bold;color:#101010">Eye Diagram</div>
<div class="t" style="left:390px;top:715px;font-size:11.3px;font-weight:bold;color:#101010">Display</div>
<div class="t" style="left:390px;top:734px;font-size:11.3px;font-weight:bold;color:#101010">Mask Test</div>
<div class="t" style="left:494px;top:715px;font-size:11.3px;font-weight:bold;color:#101010">Save/Recall</div>
<div class="t" style="left:494px;top:734px;font-size:11.3px;font-weight:bold;color:#101010">Aux In/Out</div>
<div class="t" style="left:598px;top:715px;font-size:11.3px;font-weight:bold;color:#101010">Marker</div>
<div class="t" style="left:598px;top:734px;font-size:11.3px;font-weight:bold;color:#101010">TDR/TDT</div>
<div class="t" style="left:701px;top:715px;font-size:11.3px;font-weight:bold;color:#101010">Measure</div>
<div class="t" style="left:701px;top:734px;font-size:11.3px;font-weight:bold;color:#101010">Utility</div>
<svg style="position:absolute;left:53px;top:712px" width="16" height="16" viewBox="0 0 16 16"><rect x="0" y="0" width="16" height="16" fill="#a8acb0"/><path d="M3 3 L12 12" stroke="#5a4a10" stroke-width="9" stroke-linecap="round"/><path d="M3 3 L12 12" stroke="#d8b830" stroke-width="6" stroke-linecap="round"/><path d="M4 5 L9 10" stroke="#fff4a0" stroke-width="2"/><circle cx="11" cy="11" r="1.5" fill="#3a2a00"/></svg>
<div class="t" style="left:51px;top:731px;font:italic bold 15px 'Liberation Serif';color:#101010">f</div>
<div class="t" style="left:57px;top:735px;font:italic 11px 'Liberation Serif';color:#101010;letter-spacing:-0.8px">(ω)</div>
<svg style="position:absolute;left:155px;top:713px" width="22" height="14" viewBox="0 0 22 14"><path d="M1 13 Q3 13 3 8 V1 H6" stroke="#101010" stroke-width="2" fill="none"/><path d="M3 5 V9" stroke="#e02020" stroke-width="2.2"/><path d="M6 1 V4" stroke="#30c030" stroke-width="2"/><path d="M7 1 V13 H10" stroke="#101010" stroke-width="2" fill="none"/><path d="M7 5 V9" stroke="#2a30d0" stroke-width="2.2"/><path d="M9 11 V14" stroke="#e8e020" stroke-width="2"/><path d="M11 13 Q13 13 13 8 V1 H16" stroke="#101010" stroke-width="2" fill="none"/><path d="M13 5 V9" stroke="#8a30d0" stroke-width="2.2"/><path d="M15 0 V3" stroke="#30c030" stroke-width="2"/><path d="M17 1 V13 H20" stroke="#101010" stroke-width="2" fill="none"/><path d="M17 5 V9" stroke="#30c0d0" stroke-width="2.2"/></svg>
<svg style="position:absolute;left:155px;top:732px" width="22" height="14" viewBox="0 0 22 14"><path d="M0 14 V13.0 H2.3 V12.5 H3.6 V12.0 H4.9 V11.0 H6.2 V10.0 H7.5 V8.0 H8.8 V5.0 H10.1 V1.0 H11.4 V4.0 H12.7 V7.0 H14.0 V9.0 H15.3 V10.0 H16.6 V11.0 H17.9 V12.0 H19.2 V12.5 H20.5 V13.0 H21.8 V14 Z" fill="#e80818"/><path d="M2.3 14 V12.5 M3.6 14 V12.0 M4.9 14 V11.0 M6.2 14 V10.0 M7.5 14 V8.0 M8.8 14 V5.0 M10.1 14 V1.0 M11.4 14 V4.0 M12.7 14 V7.0 M14.0 14 V9.0 M15.3 14 V10.0 M16.6 14 V11.0 M17.9 14 V12.0 M19.2 14 V12.5 M20.5 14 V13.0 " stroke="#a00010" stroke-width="0.4"/></svg>
<svg style="position:absolute;left:259px;top:713px" width="22" height="14" viewBox="0 0 22 14"><path d="M0 12.5 H11 V1.5 H22" stroke="#2a40d8" stroke-width="2" fill="none"/><path d="M6 7 H17" stroke="#d02020" stroke-width="1.6"/><path d="M5 7 L8 4.5 V9.5 Z M18 7 L15 4.5 V9.5 Z" fill="#d02020"/></svg>
<svg style="position:absolute;left:259px;top:733px" width="22" height="12" viewBox="0 0 22 12"><path d="M1 1 H21 M1 11 H21 M1 1 L11 11 L21 1 M1 11 L11 1 L21 11" stroke="#2a40e0" stroke-width="1.8" fill="none"/></svg>
<svg style="position:absolute;left:362px;top:712px" width="24" height="16" viewBox="0 0 24 16"><rect x="0.5" y="0.5" width="23" height="15" rx="2" fill="#c8d0d0" stroke="#808888"/><rect x="2.5" y="3" width="19" height="9" fill="#d8f060" stroke="#101010" stroke-width="1.5"/><path d="M4 5 L8 10 M8 5 L4 10 M10 5 L14 10 M14 5 L10 10 M16 5 L20 10 M20 5 L16 10" stroke="#208020" stroke-width="0.9"/><rect x="2" y="14" width="21" height="2" fill="#101010"/></svg>
<svg style="position:absolute;left:363px;top:732px" width="22" height="14" viewBox="0 0 22 14"><rect x="2" y="0" width="18" height="1.5" fill="#8a9898"/><rect x="2" y="12.5" width="18" height="1.5" fill="#6a8a7a"/><path d="M1 3 H21 M1 11 H21 M1 3 L6 7 L1 11 M21 3 L16 7 L21 11" stroke="#2a40e0" stroke-width="1.8" fill="none"/><path d="M6 7 L9 4.5 H13 L16 7 L13 9.5 H9 Z" fill="none" stroke="#2a40e0" stroke-width="1.6"/><ellipse cx="11" cy="7" rx="3" ry="1.8" fill="#8aa090"/></svg>
<svg style="position:absolute;left:470px;top:712px" width="16" height="16" viewBox="0 0 16 16"><rect x="0" y="0" width="16" height="16" fill="#101010"/><rect x="4" y="0.5" width="8" height="4" fill="#e8ecec"/><rect x="10" y="1" width="1" height="2.5" fill="#101010"/><rect x="2" y="7" width="12" height="9" fill="#e8ecf8"/><rect x="2" y="12" width="12" height="4" fill="#8890e0"/></svg>
<svg style="position:absolute;left:466px;top:733px" width="24" height="12" viewBox="0 0 24 12"><circle cx="5.5" cy="6.5" r="4.5" fill="none" stroke="#2a40e0" stroke-width="1.8"/><path d="M1 1 L6 6.5" stroke="#2a40e0" stroke-width="1.8"/><path d="M7 4 V8 H3 Z" fill="#2a40e0"/><path d="M21 6 A4.5 4.5 0 1 1 16 1.8" fill="none" stroke="#2a40e0" stroke-width="1.8"/><path d="M14 8 L21 1.5" stroke="#2a40e0" stroke-width="1.8"/><path d="M22 0.5 V5 H18 Z" fill="#2a40e0"/></svg>
<svg style="position:absolute;left:571px;top:713px" width="22" height="14" viewBox="0 0 22 14"><path d="M0 12 H3 Q5 12 6 8 L8 2 H14 L16 8 Q17 12 19 12 H22" stroke="#2a40d8" stroke-width="1.8" fill="none"/><path d="M6 0 V14" stroke="#d02050" stroke-width="1.3" stroke-dasharray="2 1"/><path d="M15 0 V14" stroke="#d03050" stroke-width="1.3" stroke-dasharray="2 1"/></svg>
<svg style="position:absolute;left:571px;top:732px" width="22" height="14" viewBox="0 0 22 14"><path d="M0 13 H8 V7 H15 V1 H22" stroke="#2a40e0" stroke-width="2" fill="none"/></svg>
<svg style="position:absolute;left:674px;top:713px" width="22" height="14" viewBox="0 0 22 14"><path d="M0 0 H3.5 V12 L2 14 L0 12 Z M5.5 0 H9 V12 L7.5 14 L5.5 12 Z" fill="#2a38e0"/><path d="M3 4.5 H21" stroke="#2a38e0" stroke-width="2.4"/></svg>
<svg style="position:absolute;left:677px;top:731px" width="16" height="16" viewBox="0 0 16 16"><path d="M2 14 L9 7" stroke="#2a38e0" stroke-width="3.6" stroke-linecap="round"/><path d="M7 7.5 A4.5 4.5 0 0 1 11.5 1 L10 4 L12 6 L15 4.5 A4.5 4.5 0 0 1 8.5 9 Z" fill="#2a38e0"/></svg>
<svg style="position:absolute;left:8px;top:710px" width="40" height="40" viewBox="0 0 40 40">
<defs><linearGradient id="mg8" x1="0" x2="1" y1="0" y2="0.3"><stop offset="0" stop-color="#f4f8f8"/><stop offset="0.45" stop-color="#b8c4c2"/><stop offset="1" stop-color="#3a4644"/></linearGradient></defs>
<path d="M5 40 V13 C5 5 11 0 20 0 C29 0 35 5 35 13 V40 Z" fill="url(#mg8)" stroke="#5a6464" stroke-width="0.8"/>
<path d="M5 21.5 H35" stroke="#7a8484" stroke-width="0.8"/>
<ellipse cx="20" cy="11" rx="2.2" ry="4.3" fill="#202828"/><ellipse cx="19" cy="10" rx="1" ry="2.5" fill="#808888"/>
<path d="M17.8 28 C17.8 20 15.4 9 6.7 1 L0.9 12.6 L5.8 21.9 L6.7 18.8 C10.4 20 12.9 23 13 28 Z" fill="#2238e8" stroke="#8090f0" stroke-width="0.5"/>
</svg>
<svg style="position:absolute;left:776px;top:710px" width="40" height="40" viewBox="0 0 40 40">
<defs><linearGradient id="mg776" x1="0" x2="1" y1="0" y2="0.3"><stop offset="0" stop-color="#f4f8f8"/><stop offset="0.45" stop-color="#b8c4c2"/><stop offset="1" stop-color="#3a4644"/></linearGradient></defs>
<path d="M3 40 V13 C3 5 9 0 18 0 C27 0 33.5 5 33.5 13 V40 Z" fill="url(#mg776)" stroke="#5a6464" stroke-width="0.8"/>
<path d="M3 21.5 H33.5" stroke="#7a8484" stroke-width="0.8"/>
<ellipse cx="17.5" cy="11" rx="2.2" ry="4.3" fill="#202828"/><ellipse cx="16.5" cy="10" rx="1" ry="2.5" fill="#808888"/>
<path d="M20.9 28 C20.9 20 23 9 31.7 1 L37.5 12.6 L32.6 21.9 L31.7 18.8 C28 20 25.5 23 25.1 28 Z" fill="#2238e8" stroke="#8090f0" stroke-width="0.5"/>
</svg>
</body></html>
